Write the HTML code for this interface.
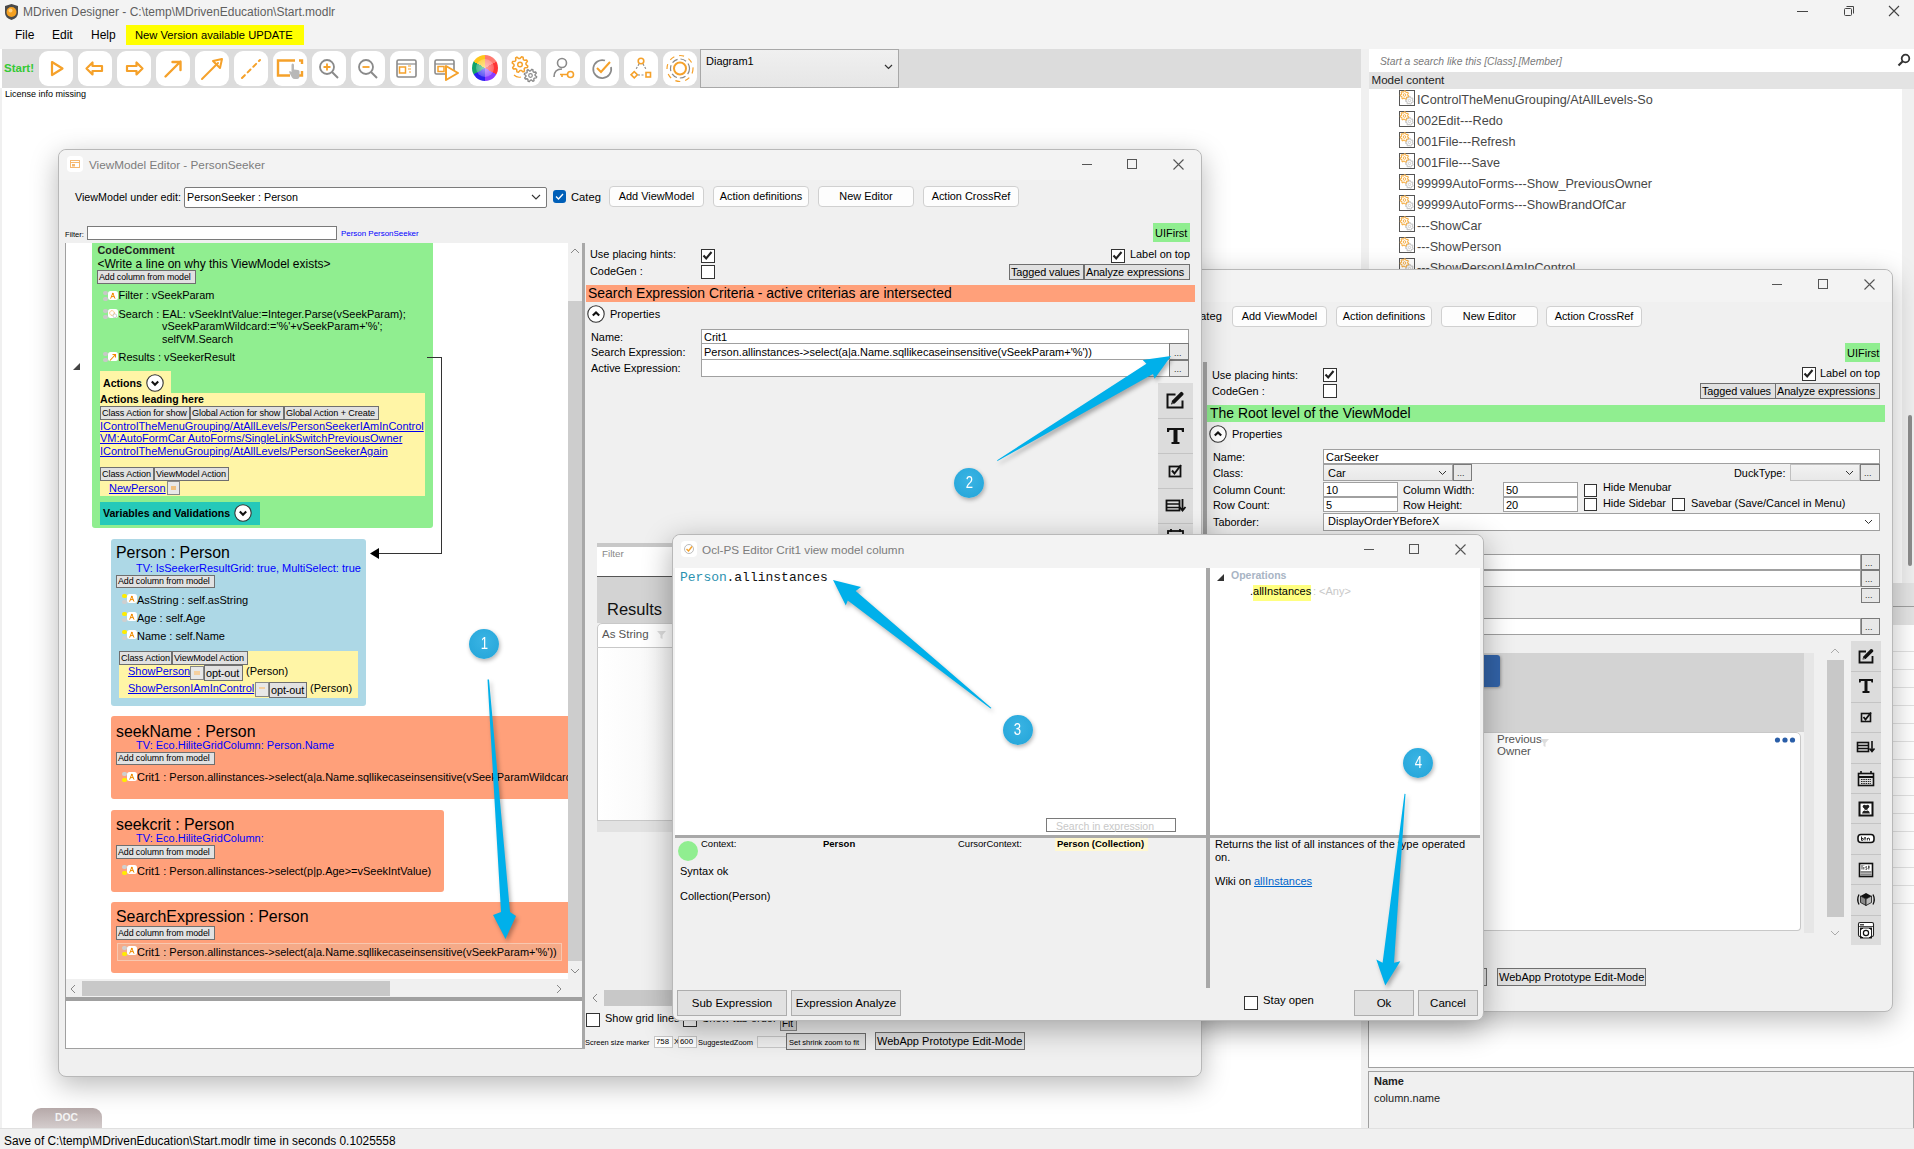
<!DOCTYPE html>
<html><head><meta charset="utf-8">
<style>
*{box-sizing:border-box;margin:0;padding:0}
html,body{width:1914px;height:1149px;overflow:hidden;background:#fff;font-family:"Liberation Sans",sans-serif;color:#000}
.a{position:absolute}
.t{position:absolute;white-space:nowrap;line-height:1}
.lnk{color:#0000ee;text-decoration:underline}
svg.a{overflow:visible}
</style></head><body>
<div class="a" style="left:0px;top:0px;width:1914px;height:1149px;background:#fff"></div>
<div class="a" style="left:0px;top:88px;width:2px;height:1042px;background:#f0f0f0"></div>
<div class="a" style="left:0px;top:0px;width:1914px;height:24px;background:#f3f3f3"></div>
<svg class="a" style="left:3px;top:3px;" width="17" height="18" viewBox="0 0 17 18"><path d="M2 3 L8.5 1 L15 3 L15 10 Q15 15 8.5 17 Q2 15 2 10 Z" fill="#4a4a4a"/><circle cx="8.5" cy="9" r="5" fill="#f5a020"/><circle cx="7.5" cy="7.5" r="2" fill="#ffd080"/></svg>
<div class="t" style="left:23px;top:5.8px;font-size:12px;color:#5f5f5f">MDriven Designer - C:\temp\MDrivenEducation\Start.modlr</div>
<div class="a" style="left:1797px;top:11px;width:11px;height:1px;background:#444"></div>
<svg class="a" style="left:1843px;top:5px;" width="12" height="12" viewBox="0 0 12 12"><rect x="1.5" y="3.5" width="7" height="7" fill="none" stroke="#444" rx="1"/><path d="M3.5 1.5 H10.5 V8.5" fill="none" stroke="#444"/></svg>
<svg class="a" style="left:1888px;top:5px;" width="12" height="12" viewBox="0 0 12 12"><path d="M1 1 L11 11 M11 1 L1 11" stroke="#444" stroke-width="1.1"/></svg>
<div class="a" style="left:0px;top:24px;width:1914px;height:25px;background:#f3f3f3"></div>
<div class="t" style="left:15px;top:28.8px;font-size:12px;color:#000">File</div>
<div class="t" style="left:52px;top:28.8px;font-size:12px;color:#000">Edit</div>
<div class="t" style="left:91px;top:28.8px;font-size:12px;color:#000">Help</div>
<div class="a" style="left:126px;top:25px;width:178px;height:20px;background:#ffff00"></div>
<div class="t" style="left:135px;top:29.5px;font-size:11.2px;color:#000">New Version available UPDATE</div>
<div class="a" style="left:2px;top:49px;width:1360px;height:39px;background:#dcdcdc"></div>
<div class="t" style="left:4px;top:63.3px;font-size:11.5px;color:#35c935;font-weight:bold">Start!</div>
<svg width="0" height="0" style="position:absolute"><defs><linearGradient id="cw" x1="0" y1="0" x2="1" y2="1"><stop offset="0" stop-color="#f5d000"/><stop offset=".3" stop-color="#ff5050"/><stop offset=".55" stop-color="#9040ff"/><stop offset=".8" stop-color="#2050ff"/><stop offset="1" stop-color="#20b060"/></linearGradient></defs></svg>
<div class="a" style="left:39px;top:51px;width:34px;height:35px;background:#fff;border-radius:9px"></div>
<svg class="a" style="left:39px;top:51px;" width="34" height="35" viewBox="0 0 34 35"><path d="M13 11 L23.5 17.5 L13 24 Z" fill="none" stroke="#f5a12a" stroke-width="2.2" stroke-linejoin="round"/></svg>
<div class="a" style="left:78px;top:51px;width:34px;height:35px;background:#fff;border-radius:9px"></div>
<svg class="a" style="left:78px;top:51px;" width="34" height="35" viewBox="0 0 34 35"><path d="M8.5 17.5 L14.5 11.5 V15 H24 V20 H14.5 V23.5 Z" fill="none" stroke="#f5a12a" stroke-width="2.2" stroke-linejoin="round"/></svg>
<div class="a" style="left:117px;top:51px;width:34px;height:35px;background:#fff;border-radius:9px"></div>
<svg class="a" style="left:117px;top:51px;" width="34" height="35" viewBox="0 0 34 35"><path d="M25.5 17.5 L19.5 11.5 V15 H10 V20 H19.5 V23.5 Z" fill="none" stroke="#f5a12a" stroke-width="2.2" stroke-linejoin="round"/></svg>
<div class="a" style="left:156px;top:51px;width:34px;height:35px;background:#fff;border-radius:9px"></div>
<svg class="a" style="left:156px;top:51px;" width="34" height="35" viewBox="0 0 34 35"><path d="M9.5 25.5 L24.5 10.5 M16.5 11 H24.5 V19" fill="none" stroke="#f5a12a" stroke-width="2.4" stroke-linecap="round" stroke-linejoin="round"/></svg>
<div class="a" style="left:195px;top:51px;width:34px;height:35px;background:#fff;border-radius:9px"></div>
<svg class="a" style="left:195px;top:51px;" width="34" height="35" viewBox="0 0 34 35"><path d="M7 28 L23 12" stroke="#f5a12a" stroke-width="2" stroke-linecap="round"/><path d="M18 10 L27 8 L25 17 Z" fill="none" stroke="#f5a12a" stroke-width="2" stroke-linejoin="round"/></svg>
<div class="a" style="left:234px;top:51px;width:34px;height:35px;background:#fff;border-radius:9px"></div>
<svg class="a" style="left:234px;top:51px;" width="34" height="35" viewBox="0 0 34 35"><path d="M8 27 L26 9" stroke="#f5a12a" stroke-width="2" stroke-linecap="round" stroke-dasharray="4 4"/></svg>
<div class="a" style="left:273px;top:51px;width:34px;height:35px;background:#fff;border-radius:9px"></div>
<svg class="a" style="left:273px;top:51px;" width="34" height="35" viewBox="0 0 34 35"><path d="M22 9.5 H5 V24.5 H17 M25 24.5 H29 V20 M29 13 V9.5 H26" fill="none" stroke="#f5a12a" stroke-width="2.4"/><path d="M18.5 14 V21 L17 20 Q15.5 20 16.5 22 L19 26.5 Q20 28 22 28 H24 Q26.5 28 26.5 25 V20.5 Q26.5 19 25 19 L21 18.5 V14 Q21 12.5 19.7 12.5 Q18.5 12.5 18.5 14 Z" fill="#b8b8b8"/></svg>
<div class="a" style="left:312px;top:51px;width:34px;height:35px;background:#fff;border-radius:9px"></div>
<svg class="a" style="left:312px;top:51px;" width="34" height="35" viewBox="0 0 34 35"><circle cx="15" cy="16" r="7" fill="none" stroke="#8a8a8a" stroke-width="1.8"/><path d="M20 21 L26 27" stroke="#8a8a8a" stroke-width="2"/><path d="M15 12.5 V19.5 M11.5 16 H18.5" stroke="#f5a12a" stroke-width="1.8"/></svg>
<div class="a" style="left:351px;top:51px;width:34px;height:35px;background:#fff;border-radius:9px"></div>
<svg class="a" style="left:351px;top:51px;" width="34" height="35" viewBox="0 0 34 35"><circle cx="15" cy="16" r="7" fill="none" stroke="#8a8a8a" stroke-width="1.8"/><path d="M20 21 L26 27" stroke="#8a8a8a" stroke-width="2"/><path d="M11.5 16 H18.5" stroke="#f5a12a" stroke-width="1.8"/></svg>
<div class="a" style="left:390px;top:51px;width:34px;height:35px;background:#fff;border-radius:9px"></div>
<svg class="a" style="left:390px;top:51px;" width="34" height="35" viewBox="0 0 34 35"><rect x="7" y="9" width="19" height="17" rx="1.5" fill="none" stroke="#8a8a8a" stroke-width="1.6"/><path d="M7 13 H26" stroke="#8a8a8a" stroke-width="1.2"/><rect x="9.5" y="16" width="6" height="6" fill="none" stroke="#f5a12a" stroke-width="1.5"/><path d="M18 15 H21 M18 18 H21 M19 21 H21" stroke="#f5a12a" stroke-width="1.2"/></svg>
<div class="a" style="left:429px;top:51px;width:34px;height:35px;background:#fff;border-radius:9px"></div>
<svg class="a" style="left:429px;top:51px;" width="34" height="35" viewBox="0 0 34 35"><rect x="6" y="9" width="19" height="14" rx="1.5" fill="none" stroke="#8a8a8a" stroke-width="1.6"/><path d="M6 13 H25" stroke="#8a8a8a" stroke-width="1.2"/><rect x="9" y="15.5" width="6" height="5" fill="none" stroke="#f5a12a" stroke-width="1.5"/><path d="M17 15 L29 22 L17 29 Z" fill="#fff" stroke="#f5a12a" stroke-width="2" stroke-linejoin="round"/></svg>
<div class="a" style="left:468px;top:51px;width:34px;height:35px;background:#fff;border-radius:9px"></div>
<svg class="a" style="left:468px;top:51px;" width="34" height="35" viewBox="0 0 34 35"></svg>
<div class="a" style="left:472px;top:55px;width:26px;height:26px;border-radius:50%;background:conic-gradient(#ff7a70 0deg 60deg,#ff3535 60deg 120deg,#8a3cff 120deg 180deg,#2a22f0 180deg 240deg,#12a36a 240deg 300deg,#ffc61a 300deg 360deg)"></div>
<div class="a" style="left:476px;top:59px;width:18px;height:18px;border-radius:50%;background:radial-gradient(rgba(255,255,255,.55),rgba(255,255,255,.1))"></div>
<div class="a" style="left:507px;top:51px;width:34px;height:35px;background:#fff;border-radius:9px"></div>
<svg class="a" style="left:507px;top:51px;" width="34" height="35" viewBox="0 0 34 35"><path d="M19.0 13.5 L20.8 15.1 L20.4 16.6 L18.0 16.8 L17.2 17.7 L17.4 20.2 L16.1 20.9 L14.2 19.4 L13.0 19.5 L11.4 21.3 L9.9 20.9 L9.7 18.5 L8.8 17.7 L6.3 17.9 L5.6 16.6 L7.1 14.7 L7.0 13.5 L5.2 11.9 L5.6 10.4 L8.0 10.2 L8.8 9.3 L8.6 6.8 L9.9 6.1 L11.8 7.6 L13.0 7.5 L14.6 5.7 L16.1 6.1 L16.3 8.5 L17.2 9.3 L19.7 9.1 L20.4 10.4 L18.9 12.3 Z" fill="none" stroke="#f5a12a" stroke-width="1.5" stroke-linejoin="round"/><circle cx="13" cy="13.5" r="2.3" fill="none" stroke="#f5a12a" stroke-width="1.4"/><path d="M7 24 Q10 27 14 26" fill="none" stroke="#f5a12a" stroke-width="1.2"/><path d="M28.1 24.5 L29.7 25.7 L29.3 26.9 L27.3 27.1 L26.8 27.8 L27.0 29.7 L25.9 30.3 L24.4 29.0 L23.5 29.1 L22.3 30.7 L21.1 30.3 L20.9 28.3 L20.2 27.8 L18.3 28.0 L17.7 26.9 L19.0 25.4 L18.9 24.5 L17.3 23.3 L17.7 22.1 L19.7 21.9 L20.2 21.2 L20.0 19.3 L21.1 18.7 L22.6 20.0 L23.5 19.9 L24.7 18.3 L25.9 18.7 L26.1 20.7 L26.8 21.2 L28.7 21.0 L29.3 22.1 L28.0 23.6 Z" fill="#fff" stroke="#8a8a8a" stroke-width="1.4" stroke-linejoin="round"/><circle cx="23.5" cy="24.5" r="1.8" fill="none" stroke="#8a8a8a" stroke-width="1.2"/></svg>
<div class="a" style="left:546px;top:51px;width:34px;height:35px;background:#fff;border-radius:9px"></div>
<svg class="a" style="left:546px;top:51px;" width="34" height="35" viewBox="0 0 34 35"><circle cx="16" cy="12" r="4.5" fill="none" stroke="#8a8a8a" stroke-width="1.6"/><path d="M8 26 Q8 18 16 18" fill="none" stroke="#8a8a8a" stroke-width="1.6"/><circle cx="24.5" cy="23.5" r="3" fill="none" stroke="#f5a12a" stroke-width="1.6"/><path d="M14 23.5 H21.5 M16 23.5 V26" stroke="#f5a12a" stroke-width="1.6"/></svg>
<div class="a" style="left:585px;top:51px;width:34px;height:35px;background:#fff;border-radius:9px"></div>
<svg class="a" style="left:585px;top:51px;" width="34" height="35" viewBox="0 0 34 35"><path d="M26 16 A9 9 0 1 1 20 9.5" fill="none" stroke="#8a8a8a" stroke-width="1.7"/><path d="M12 17 L16 21 L25 11" fill="none" stroke="#f5a12a" stroke-width="2"/></svg>
<div class="a" style="left:624px;top:51px;width:34px;height:35px;background:#fff;border-radius:9px"></div>
<svg class="a" style="left:624px;top:51px;" width="34" height="35" viewBox="0 0 34 35"><circle cx="17" cy="10" r="2.8" fill="none" stroke="#f5a12a" stroke-width="1.6"/><rect x="8" y="21.5" width="4.5" height="4.5" transform="rotate(45 10.25 23.75)" fill="none" stroke="#f5a12a" stroke-width="1.6"/><rect x="22" y="21.5" width="4.5" height="4.5" fill="none" stroke="#f5a12a" stroke-width="1.6"/><path d="M15 13 L11.5 19 M19 13 L22.5 19 M14 24 H20" stroke="#8a8a8a" stroke-width="1.2" stroke-dasharray="2 1.5"/></svg>
<div class="a" style="left:663px;top:51px;width:34px;height:35px;background:#fff;border-radius:9px"></div>
<svg class="a" style="left:663px;top:51px;" width="34" height="35" viewBox="0 0 34 35"><circle cx="17" cy="17.5" r="6" fill="none" stroke="#f5a12a" stroke-width="2"/><circle cx="17" cy="17.5" r="9.5" fill="none" stroke="#8a8a8a" stroke-width="1.2" stroke-dasharray="6 3"/><circle cx="17" cy="17.5" r="13" fill="none" stroke="#f5a12a" stroke-width="1.2" stroke-dasharray="5 5"/></svg>
<div class="a" style="left:700px;top:49px;width:199px;height:39px;background:linear-gradient(#f0f0f0,#e6e6e6);border:1px solid #a8a8a8"></div>
<div class="t" style="left:706px;top:55.7px;font-size:11px;color:#000">Diagram1</div>
<svg class="a" style="left:884px;top:64px;" width="9" height="6" viewBox="0 0 9 6"><path d="M1 1 L4.5 4.5 L8 1" fill="none" stroke="#333" stroke-width="1.2"/></svg>
<div class="t" style="left:5px;top:90.4px;font-size:9px;color:#000">License info missing</div>
<div class="a" style="left:1361px;top:49px;width:8px;height:1081px;background:#f0f0f0"></div>
<div class="a" style="left:1369px;top:49px;width:545px;height:23px;background:#fff"></div>
<div class="t" style="left:1380px;top:56.8px;font-size:10.3px;color:#7a7a7a;font-style:italic">Start a search like this [Class].[Member]</div>
<svg class="a" style="left:1897px;top:53px;" width="14" height="14" viewBox="0 0 14 14"><circle cx="8.5" cy="5.5" r="3.8" fill="none" stroke="#333" stroke-width="1.8"/><path d="M6 8 L1.5 12.5" stroke="#333" stroke-width="2.2"/></svg>
<div class="a" style="left:1369px;top:72px;width:545px;height:17px;background:#e3e3e3"></div>
<div class="t" style="left:1371.5px;top:73.7px;font-size:11.6px;color:#222">Model content</div>
<div class="a" style="left:1369px;top:89px;width:533px;height:978px;background:#fff"></div>
<div class="a" style="left:1902px;top:89px;width:12px;height:494px;background:#f0f0f0"></div>
<div class="a" style="left:1908px;top:415px;width:4px;height:151px;background:#8c8c8c;border-radius:2px"></div>
<div class="a" style="left:1368px;top:583px;width:1px;height:485px;background:#a0a0a0"></div>
<div class="a" style="left:1368px;top:1067px;width:546px;height:1px;background:#a0a0a0"></div>
<div class="a" style="left:1369px;top:583px;width:545px;height:42px;background:#e4e4e4"></div>
<div class="a" style="left:1369px;top:606px;width:545px;height:1px;background:#a0a0a0"></div>
<div class="a" style="left:1369px;top:651px;width:545px;height:1px;background:#e2e2e2"></div>
<div class="a" style="left:1369px;top:669px;width:545px;height:1px;background:#e2e2e2"></div>
<div class="a" style="left:1369px;top:687px;width:545px;height:1px;background:#e2e2e2"></div>
<div class="a" style="left:1369px;top:705px;width:545px;height:1px;background:#e2e2e2"></div>
<div class="a" style="left:1369px;top:723px;width:545px;height:1px;background:#e2e2e2"></div>
<div class="a" style="left:1369px;top:741px;width:545px;height:1px;background:#e2e2e2"></div>
<div class="a" style="left:1369px;top:759px;width:545px;height:1px;background:#e2e2e2"></div>
<div class="a" style="left:1369px;top:777px;width:545px;height:1px;background:#e2e2e2"></div>
<div class="a" style="left:1369px;top:795px;width:545px;height:1px;background:#e2e2e2"></div>
<div class="a" style="left:1369px;top:813px;width:545px;height:1px;background:#e2e2e2"></div>
<div class="a" style="left:1369px;top:831px;width:545px;height:1px;background:#e2e2e2"></div>
<div class="a" style="left:1369px;top:849px;width:545px;height:1px;background:#e2e2e2"></div>
<div class="a" style="left:1369px;top:867px;width:545px;height:1px;background:#e2e2e2"></div>
<div class="a" style="left:1369px;top:885px;width:545px;height:1px;background:#e2e2e2"></div>
<div class="a" style="left:1369px;top:903px;width:545px;height:1px;background:#e2e2e2"></div>
<div class="a" style="left:1399px;top:90px;width:16px;height:16px;background:#fff;border:1px solid #555"></div>
<svg class="a" style="left:1399px;top:90px;" width="16" height="16" viewBox="0 0 16 16"><path d="M13.5 10.5 L14.2 11.3 L13.9 12.1 L12.8 12.4 L12.4 12.8 L12.1 13.9 L11.3 14.2 L10.5 13.5 L9.8 13.4 L8.9 13.9 L8.1 13.5 L8.2 12.4 L7.8 11.8 L6.8 11.3 L6.7 10.5 L7.6 9.8 L7.8 9.2 L7.5 8.1 L8.1 7.5 L9.2 7.8 L9.8 7.6 L10.5 6.7 L11.3 6.8 L11.8 7.8 L12.4 8.2 L13.5 8.1 L13.9 8.9 L13.4 9.8 Z" fill="#fff" stroke="#c8c8c8" stroke-width="1.1"/><circle cx="10.5" cy="10.5" r="1.2" fill="none" stroke="#c8c8c8" stroke-width=".9"/><path d="M8.7 5.0 L9.6 5.9 L9.3 6.8 L8.0 7.0 L7.5 7.5 L7.3 8.8 L6.4 9.1 L5.5 8.2 L4.8 8.1 L3.7 8.8 L2.9 8.3 L3.0 7.0 L2.6 6.4 L1.4 5.9 L1.3 5.0 L2.4 4.3 L2.6 3.6 L2.2 2.4 L2.9 1.7 L4.1 2.1 L4.8 1.9 L5.5 0.8 L6.4 0.9 L6.9 2.1 L7.5 2.5 L8.8 2.4 L9.3 3.2 L8.6 4.3 Z" fill="#fff" stroke="#f5b04a" stroke-width="1.1"/><circle cx="5.5" cy="5" r="1.3" fill="none" stroke="#f5b04a" stroke-width="1"/></svg>
<div class="t" style="left:1417px;top:94.3px;font-size:12.66px;color:#474747">IControlTheMenuGrouping/AtAllLevels-So</div>
<div class="a" style="left:1399px;top:111px;width:16px;height:16px;background:#fff;border:1px solid #555"></div>
<svg class="a" style="left:1399px;top:111px;" width="16" height="16" viewBox="0 0 16 16"><path d="M13.5 10.5 L14.2 11.3 L13.9 12.1 L12.8 12.4 L12.4 12.8 L12.1 13.9 L11.3 14.2 L10.5 13.5 L9.8 13.4 L8.9 13.9 L8.1 13.5 L8.2 12.4 L7.8 11.8 L6.8 11.3 L6.7 10.5 L7.6 9.8 L7.8 9.2 L7.5 8.1 L8.1 7.5 L9.2 7.8 L9.8 7.6 L10.5 6.7 L11.3 6.8 L11.8 7.8 L12.4 8.2 L13.5 8.1 L13.9 8.9 L13.4 9.8 Z" fill="#fff" stroke="#c8c8c8" stroke-width="1.1"/><circle cx="10.5" cy="10.5" r="1.2" fill="none" stroke="#c8c8c8" stroke-width=".9"/><path d="M8.7 5.0 L9.6 5.9 L9.3 6.8 L8.0 7.0 L7.5 7.5 L7.3 8.8 L6.4 9.1 L5.5 8.2 L4.8 8.1 L3.7 8.8 L2.9 8.3 L3.0 7.0 L2.6 6.4 L1.4 5.9 L1.3 5.0 L2.4 4.3 L2.6 3.6 L2.2 2.4 L2.9 1.7 L4.1 2.1 L4.8 1.9 L5.5 0.8 L6.4 0.9 L6.9 2.1 L7.5 2.5 L8.8 2.4 L9.3 3.2 L8.6 4.3 Z" fill="#fff" stroke="#f5b04a" stroke-width="1.1"/><circle cx="5.5" cy="5" r="1.3" fill="none" stroke="#f5b04a" stroke-width="1"/></svg>
<div class="t" style="left:1417px;top:115.3px;font-size:12.66px;color:#474747">002Edit---Redo</div>
<div class="a" style="left:1399px;top:132px;width:16px;height:16px;background:#fff;border:1px solid #555"></div>
<svg class="a" style="left:1399px;top:132px;" width="16" height="16" viewBox="0 0 16 16"><path d="M13.5 10.5 L14.2 11.3 L13.9 12.1 L12.8 12.4 L12.4 12.8 L12.1 13.9 L11.3 14.2 L10.5 13.5 L9.8 13.4 L8.9 13.9 L8.1 13.5 L8.2 12.4 L7.8 11.8 L6.8 11.3 L6.7 10.5 L7.6 9.8 L7.8 9.2 L7.5 8.1 L8.1 7.5 L9.2 7.8 L9.8 7.6 L10.5 6.7 L11.3 6.8 L11.8 7.8 L12.4 8.2 L13.5 8.1 L13.9 8.9 L13.4 9.8 Z" fill="#fff" stroke="#c8c8c8" stroke-width="1.1"/><circle cx="10.5" cy="10.5" r="1.2" fill="none" stroke="#c8c8c8" stroke-width=".9"/><path d="M8.7 5.0 L9.6 5.9 L9.3 6.8 L8.0 7.0 L7.5 7.5 L7.3 8.8 L6.4 9.1 L5.5 8.2 L4.8 8.1 L3.7 8.8 L2.9 8.3 L3.0 7.0 L2.6 6.4 L1.4 5.9 L1.3 5.0 L2.4 4.3 L2.6 3.6 L2.2 2.4 L2.9 1.7 L4.1 2.1 L4.8 1.9 L5.5 0.8 L6.4 0.9 L6.9 2.1 L7.5 2.5 L8.8 2.4 L9.3 3.2 L8.6 4.3 Z" fill="#fff" stroke="#f5b04a" stroke-width="1.1"/><circle cx="5.5" cy="5" r="1.3" fill="none" stroke="#f5b04a" stroke-width="1"/></svg>
<div class="t" style="left:1417px;top:136.3px;font-size:12.66px;color:#474747">001File---Refresh</div>
<div class="a" style="left:1399px;top:153px;width:16px;height:16px;background:#fff;border:1px solid #555"></div>
<svg class="a" style="left:1399px;top:153px;" width="16" height="16" viewBox="0 0 16 16"><path d="M13.5 10.5 L14.2 11.3 L13.9 12.1 L12.8 12.4 L12.4 12.8 L12.1 13.9 L11.3 14.2 L10.5 13.5 L9.8 13.4 L8.9 13.9 L8.1 13.5 L8.2 12.4 L7.8 11.8 L6.8 11.3 L6.7 10.5 L7.6 9.8 L7.8 9.2 L7.5 8.1 L8.1 7.5 L9.2 7.8 L9.8 7.6 L10.5 6.7 L11.3 6.8 L11.8 7.8 L12.4 8.2 L13.5 8.1 L13.9 8.9 L13.4 9.8 Z" fill="#fff" stroke="#c8c8c8" stroke-width="1.1"/><circle cx="10.5" cy="10.5" r="1.2" fill="none" stroke="#c8c8c8" stroke-width=".9"/><path d="M8.7 5.0 L9.6 5.9 L9.3 6.8 L8.0 7.0 L7.5 7.5 L7.3 8.8 L6.4 9.1 L5.5 8.2 L4.8 8.1 L3.7 8.8 L2.9 8.3 L3.0 7.0 L2.6 6.4 L1.4 5.9 L1.3 5.0 L2.4 4.3 L2.6 3.6 L2.2 2.4 L2.9 1.7 L4.1 2.1 L4.8 1.9 L5.5 0.8 L6.4 0.9 L6.9 2.1 L7.5 2.5 L8.8 2.4 L9.3 3.2 L8.6 4.3 Z" fill="#fff" stroke="#f5b04a" stroke-width="1.1"/><circle cx="5.5" cy="5" r="1.3" fill="none" stroke="#f5b04a" stroke-width="1"/></svg>
<div class="t" style="left:1417px;top:157.3px;font-size:12.66px;color:#474747">001File---Save</div>
<div class="a" style="left:1399px;top:174px;width:16px;height:16px;background:#fff;border:1px solid #555"></div>
<svg class="a" style="left:1399px;top:174px;" width="16" height="16" viewBox="0 0 16 16"><path d="M13.5 10.5 L14.2 11.3 L13.9 12.1 L12.8 12.4 L12.4 12.8 L12.1 13.9 L11.3 14.2 L10.5 13.5 L9.8 13.4 L8.9 13.9 L8.1 13.5 L8.2 12.4 L7.8 11.8 L6.8 11.3 L6.7 10.5 L7.6 9.8 L7.8 9.2 L7.5 8.1 L8.1 7.5 L9.2 7.8 L9.8 7.6 L10.5 6.7 L11.3 6.8 L11.8 7.8 L12.4 8.2 L13.5 8.1 L13.9 8.9 L13.4 9.8 Z" fill="#fff" stroke="#c8c8c8" stroke-width="1.1"/><circle cx="10.5" cy="10.5" r="1.2" fill="none" stroke="#c8c8c8" stroke-width=".9"/><path d="M8.7 5.0 L9.6 5.9 L9.3 6.8 L8.0 7.0 L7.5 7.5 L7.3 8.8 L6.4 9.1 L5.5 8.2 L4.8 8.1 L3.7 8.8 L2.9 8.3 L3.0 7.0 L2.6 6.4 L1.4 5.9 L1.3 5.0 L2.4 4.3 L2.6 3.6 L2.2 2.4 L2.9 1.7 L4.1 2.1 L4.8 1.9 L5.5 0.8 L6.4 0.9 L6.9 2.1 L7.5 2.5 L8.8 2.4 L9.3 3.2 L8.6 4.3 Z" fill="#fff" stroke="#f5b04a" stroke-width="1.1"/><circle cx="5.5" cy="5" r="1.3" fill="none" stroke="#f5b04a" stroke-width="1"/></svg>
<div class="t" style="left:1417px;top:178.3px;font-size:12.66px;color:#474747">99999AutoForms---Show_PreviousOwner</div>
<div class="a" style="left:1399px;top:195px;width:16px;height:16px;background:#fff;border:1px solid #555"></div>
<svg class="a" style="left:1399px;top:195px;" width="16" height="16" viewBox="0 0 16 16"><path d="M13.5 10.5 L14.2 11.3 L13.9 12.1 L12.8 12.4 L12.4 12.8 L12.1 13.9 L11.3 14.2 L10.5 13.5 L9.8 13.4 L8.9 13.9 L8.1 13.5 L8.2 12.4 L7.8 11.8 L6.8 11.3 L6.7 10.5 L7.6 9.8 L7.8 9.2 L7.5 8.1 L8.1 7.5 L9.2 7.8 L9.8 7.6 L10.5 6.7 L11.3 6.8 L11.8 7.8 L12.4 8.2 L13.5 8.1 L13.9 8.9 L13.4 9.8 Z" fill="#fff" stroke="#c8c8c8" stroke-width="1.1"/><circle cx="10.5" cy="10.5" r="1.2" fill="none" stroke="#c8c8c8" stroke-width=".9"/><path d="M8.7 5.0 L9.6 5.9 L9.3 6.8 L8.0 7.0 L7.5 7.5 L7.3 8.8 L6.4 9.1 L5.5 8.2 L4.8 8.1 L3.7 8.8 L2.9 8.3 L3.0 7.0 L2.6 6.4 L1.4 5.9 L1.3 5.0 L2.4 4.3 L2.6 3.6 L2.2 2.4 L2.9 1.7 L4.1 2.1 L4.8 1.9 L5.5 0.8 L6.4 0.9 L6.9 2.1 L7.5 2.5 L8.8 2.4 L9.3 3.2 L8.6 4.3 Z" fill="#fff" stroke="#f5b04a" stroke-width="1.1"/><circle cx="5.5" cy="5" r="1.3" fill="none" stroke="#f5b04a" stroke-width="1"/></svg>
<div class="t" style="left:1417px;top:199.3px;font-size:12.66px;color:#474747">99999AutoForms---ShowBrandOfCar</div>
<div class="a" style="left:1399px;top:216px;width:16px;height:16px;background:#fff;border:1px solid #555"></div>
<svg class="a" style="left:1399px;top:216px;" width="16" height="16" viewBox="0 0 16 16"><path d="M13.5 10.5 L14.2 11.3 L13.9 12.1 L12.8 12.4 L12.4 12.8 L12.1 13.9 L11.3 14.2 L10.5 13.5 L9.8 13.4 L8.9 13.9 L8.1 13.5 L8.2 12.4 L7.8 11.8 L6.8 11.3 L6.7 10.5 L7.6 9.8 L7.8 9.2 L7.5 8.1 L8.1 7.5 L9.2 7.8 L9.8 7.6 L10.5 6.7 L11.3 6.8 L11.8 7.8 L12.4 8.2 L13.5 8.1 L13.9 8.9 L13.4 9.8 Z" fill="#fff" stroke="#c8c8c8" stroke-width="1.1"/><circle cx="10.5" cy="10.5" r="1.2" fill="none" stroke="#c8c8c8" stroke-width=".9"/><path d="M8.7 5.0 L9.6 5.9 L9.3 6.8 L8.0 7.0 L7.5 7.5 L7.3 8.8 L6.4 9.1 L5.5 8.2 L4.8 8.1 L3.7 8.8 L2.9 8.3 L3.0 7.0 L2.6 6.4 L1.4 5.9 L1.3 5.0 L2.4 4.3 L2.6 3.6 L2.2 2.4 L2.9 1.7 L4.1 2.1 L4.8 1.9 L5.5 0.8 L6.4 0.9 L6.9 2.1 L7.5 2.5 L8.8 2.4 L9.3 3.2 L8.6 4.3 Z" fill="#fff" stroke="#f5b04a" stroke-width="1.1"/><circle cx="5.5" cy="5" r="1.3" fill="none" stroke="#f5b04a" stroke-width="1"/></svg>
<div class="t" style="left:1417px;top:220.3px;font-size:12.66px;color:#474747">---ShowCar</div>
<div class="a" style="left:1399px;top:237px;width:16px;height:16px;background:#fff;border:1px solid #555"></div>
<svg class="a" style="left:1399px;top:237px;" width="16" height="16" viewBox="0 0 16 16"><path d="M13.5 10.5 L14.2 11.3 L13.9 12.1 L12.8 12.4 L12.4 12.8 L12.1 13.9 L11.3 14.2 L10.5 13.5 L9.8 13.4 L8.9 13.9 L8.1 13.5 L8.2 12.4 L7.8 11.8 L6.8 11.3 L6.7 10.5 L7.6 9.8 L7.8 9.2 L7.5 8.1 L8.1 7.5 L9.2 7.8 L9.8 7.6 L10.5 6.7 L11.3 6.8 L11.8 7.8 L12.4 8.2 L13.5 8.1 L13.9 8.9 L13.4 9.8 Z" fill="#fff" stroke="#c8c8c8" stroke-width="1.1"/><circle cx="10.5" cy="10.5" r="1.2" fill="none" stroke="#c8c8c8" stroke-width=".9"/><path d="M8.7 5.0 L9.6 5.9 L9.3 6.8 L8.0 7.0 L7.5 7.5 L7.3 8.8 L6.4 9.1 L5.5 8.2 L4.8 8.1 L3.7 8.8 L2.9 8.3 L3.0 7.0 L2.6 6.4 L1.4 5.9 L1.3 5.0 L2.4 4.3 L2.6 3.6 L2.2 2.4 L2.9 1.7 L4.1 2.1 L4.8 1.9 L5.5 0.8 L6.4 0.9 L6.9 2.1 L7.5 2.5 L8.8 2.4 L9.3 3.2 L8.6 4.3 Z" fill="#fff" stroke="#f5b04a" stroke-width="1.1"/><circle cx="5.5" cy="5" r="1.3" fill="none" stroke="#f5b04a" stroke-width="1"/></svg>
<div class="t" style="left:1417px;top:241.3px;font-size:12.66px;color:#474747">---ShowPerson</div>
<div class="a" style="left:1399px;top:258px;width:16px;height:16px;background:#fff;border:1px solid #555"></div>
<svg class="a" style="left:1399px;top:258px;" width="16" height="16" viewBox="0 0 16 16"><path d="M13.5 10.5 L14.2 11.3 L13.9 12.1 L12.8 12.4 L12.4 12.8 L12.1 13.9 L11.3 14.2 L10.5 13.5 L9.8 13.4 L8.9 13.9 L8.1 13.5 L8.2 12.4 L7.8 11.8 L6.8 11.3 L6.7 10.5 L7.6 9.8 L7.8 9.2 L7.5 8.1 L8.1 7.5 L9.2 7.8 L9.8 7.6 L10.5 6.7 L11.3 6.8 L11.8 7.8 L12.4 8.2 L13.5 8.1 L13.9 8.9 L13.4 9.8 Z" fill="#fff" stroke="#c8c8c8" stroke-width="1.1"/><circle cx="10.5" cy="10.5" r="1.2" fill="none" stroke="#c8c8c8" stroke-width=".9"/><path d="M8.7 5.0 L9.6 5.9 L9.3 6.8 L8.0 7.0 L7.5 7.5 L7.3 8.8 L6.4 9.1 L5.5 8.2 L4.8 8.1 L3.7 8.8 L2.9 8.3 L3.0 7.0 L2.6 6.4 L1.4 5.9 L1.3 5.0 L2.4 4.3 L2.6 3.6 L2.2 2.4 L2.9 1.7 L4.1 2.1 L4.8 1.9 L5.5 0.8 L6.4 0.9 L6.9 2.1 L7.5 2.5 L8.8 2.4 L9.3 3.2 L8.6 4.3 Z" fill="#fff" stroke="#f5b04a" stroke-width="1.1"/><circle cx="5.5" cy="5" r="1.3" fill="none" stroke="#f5b04a" stroke-width="1"/></svg>
<div class="t" style="left:1417px;top:262.3px;font-size:12.66px;color:#474747">---ShowPersonIAmInControl</div>
<div class="a" style="left:1368px;top:1071px;width:546px;height:59px;background:#f0f0f0;border:1px solid #a0a0a0"></div>
<div class="t" style="left:1374px;top:1075.7px;font-size:11px;color:#222;font-weight:bold">Name</div>
<div class="t" style="left:1374px;top:1092.7px;font-size:11px;color:#222">column.name</div>
<div class="a" style="left:1369px;top:1067px;width:545px;height:4px;background:#f0f0f0"></div>
<div class="a" style="left:1368px;top:1067px;width:546px;height:1px;background:#a0a0a0"></div>
<div class="a" style="left:0px;top:1128px;width:1914px;height:1px;background:#e0e0e0"></div>
<div class="a" style="left:0px;top:1129px;width:1914px;height:20px;background:#f0f0f0"></div>
<div class="t" style="left:4px;top:1136.4px;font-size:11.87px;color:#000">Save of C:\temp\MDrivenEducation\Start.modlr time in seconds 0.1025558</div>
<div class="a" style="left:32px;top:1108px;width:70px;height:20px;background:linear-gradient(#b6a9a9,#d4cccc);border-radius:9px 9px 0 0"></div>
<div class="t" style="left:55px;top:1113.3px;font-size:10.3px;color:#f4f4f4;font-weight:bold">DOC</div>
<div class="a" style="left:1100px;top:269px;width:793px;height:743px;background:#f0f0f0;border:1px solid #b8b8b8;border-radius:8px;box-shadow:0 8px 28px rgba(0,0,0,.28);overflow:hidden"></div>
<div class="a" style="left:1101px;top:270px;width:791px;height:32px;background:#f3f3f3;border-radius:8px 8px 0 0"></div>
<div class="a" style="left:1772px;top:284px;width:10px;height:1px;background:#555"></div>
<div class="a" style="left:1818px;top:279px;width:10px;height:10px;border:1px solid #555"></div>
<svg class="a" style="left:1864px;top:279px;" width="11" height="11" viewBox="0 0 11 11"><path d="M.5 .5 L10.5 10.5 M10.5 .5 L.5 10.5" stroke="#555" stroke-width="1.1"/></svg>
<div class="t" style="left:1192px;top:310.5px;font-size:11.2px">Categ</div>
<div class="a" style="left:1232px;top:306px;width:95px;height:21px;background:#fdfdfd;border:1px solid #d0d0d0;font-size:10.9px;line-height:19px;color:#000;text-align:center;border-radius:4px;white-space:nowrap;overflow:hidden">Add ViewModel</div>
<div class="a" style="left:1336px;top:306px;width:96px;height:21px;background:#fdfdfd;border:1px solid #d0d0d0;font-size:10.9px;line-height:19px;color:#000;text-align:center;border-radius:4px;white-space:nowrap;overflow:hidden">Action definitions</div>
<div class="a" style="left:1441px;top:306px;width:97px;height:21px;background:#fdfdfd;border:1px solid #d0d0d0;font-size:10.9px;line-height:19px;color:#000;text-align:center;border-radius:4px;white-space:nowrap;overflow:hidden">New Editor</div>
<div class="a" style="left:1546px;top:306px;width:96px;height:21px;background:#fdfdfd;border:1px solid #d0d0d0;font-size:10.9px;line-height:19px;color:#000;text-align:center;border-radius:4px;white-space:nowrap;overflow:hidden">Action CrossRef</div>
<div class="a" style="left:1845px;top:343px;width:35px;height:19px;background:#90ee90"></div>
<div class="t" style="left:1847px;top:347.7px;font-size:11px;color:#000">UIFirst</div>
<div class="a" style="left:1203px;top:362px;width:4px;height:650px;background:#a8a8a8"></div>
<div class="t" style="left:1212px;top:369.8px;font-size:10.9px">Use placing hints:</div>
<div class="t" style="left:1212px;top:385.8px;font-size:10.9px">CodeGen :</div>
<div class="a" style="left:1323px;top:368px;width:14px;height:14px;border:1px solid #333;background:#fff"></div>
<svg class="a" style="left:1323px;top:368px" width="14" height="14"><path d="M2.5 6.5 L5.2 9.5 L10.5 3" stroke="#222" stroke-width="2.1" fill="none"/></svg>
<div class="a" style="left:1323px;top:384px;width:14px;height:14px;border:1px solid #333;background:#fff"></div>
<div class="a" style="left:1802px;top:367px;width:14px;height:14px;border:1px solid #333;background:#fff"></div>
<svg class="a" style="left:1802px;top:367px" width="14" height="14"><path d="M2.5 6.5 L5.2 9.5 L10.5 3" stroke="#222" stroke-width="2.1" fill="none"/></svg>
<div class="t" style="left:1820px;top:367.8px;font-size:10.9px">Label on top</div>
<div class="a" style="left:1700px;top:383px;width:76px;height:16px;background:#e1e1e1;border:1px solid #6f6f6f;font-size:10.9px;line-height:14px;color:#000;text-align:center;padding:0 1px;text-align:left;letter-spacing:-.1px;white-space:nowrap;overflow:hidden">Tagged values</div>
<div class="a" style="left:1775px;top:383px;width:105px;height:16px;background:#e1e1e1;border:1px solid #6f6f6f;font-size:10.9px;line-height:14px;color:#000;text-align:center;padding:0 1px;text-align:left;letter-spacing:-.1px;white-space:nowrap;overflow:hidden">Analyze expressions</div>
<div class="a" style="left:1207px;top:405px;width:678px;height:17px;background:#90ee90"></div>
<div class="t" style="left:1210px;top:406.7px;font-size:13.96px">The Root level of the ViewModel</div>
<svg class="a" style="left:1209px;top:425px;" width="19" height="19" viewBox="0 0 19 19"><circle cx="9" cy="9" r="8.2" fill="#fff" stroke="#333" stroke-width="1.1"/><path d="M5.8 10.6 L9 7.4 L12.2 10.6" fill="none" stroke="#111" stroke-width="2.1"/></svg>
<div class="t" style="left:1232px;top:428.7px;font-size:11px">Properties</div>
<div class="t" style="left:1213px;top:451.8px;font-size:10.9px">Name:</div>
<div class="t" style="left:1213px;top:467.8px;font-size:10.9px">Class:</div>
<div class="t" style="left:1213px;top:484.8px;font-size:10.9px">Column Count:</div>
<div class="t" style="left:1213px;top:499.8px;font-size:10.9px">Row Count:</div>
<div class="t" style="left:1213px;top:516.8px;font-size:10.9px">Taborder:</div>
<div class="a" style="left:1323px;top:449px;width:557px;height:15px;background:#fff;border:1px solid #a0a0a0"></div>
<div class="t" style="left:1326px;top:451.7px;font-size:11px">CarSeeker</div>
<div class="a" style="left:1323px;top:464px;width:130px;height:17px;background:linear-gradient(#f2f2f2,#e8e8e8);border:1px solid #a0a0a0"></div>
<div class="t" style="left:1328px;top:467.7px;font-size:11px">Car</div>
<svg class="a" style="left:1438px;top:470px;" width="9" height="6" viewBox="0 0 9 6"><path d="M1 1 L4.5 4.5 L8 1" fill="none" stroke="#333" stroke-width="1"/></svg>
<div class="a" style="left:1453px;top:464px;width:19px;height:17px;background:#e8e8e8;border:1px solid #7a7a7a"></div>
<div class="t" style="left:1457px;top:469.4px;font-size:9px;color:#333">...</div>
<div class="t" style="left:1734px;top:467.8px;font-size:10.9px">DuckType:</div>
<div class="a" style="left:1790px;top:464px;width:70px;height:17px;background:linear-gradient(#f2f2f2,#e8e8e8);border:1px solid #c0c0c0"></div>
<svg class="a" style="left:1845px;top:470px;" width="9" height="6" viewBox="0 0 9 6"><path d="M1 1 L4.5 4.5 L8 1" fill="none" stroke="#333" stroke-width="1"/></svg>
<div class="a" style="left:1860px;top:464px;width:20px;height:17px;background:#e8e8e8;border:1px solid #7a7a7a"></div>
<div class="t" style="left:1864px;top:469.4px;font-size:9px;color:#333">...</div>
<div class="a" style="left:1323px;top:482px;width:75px;height:15px;background:#fff;border:1px solid #a0a0a0"></div>
<div class="t" style="left:1326px;top:484.7px;font-size:11px">10</div>
<div class="a" style="left:1323px;top:497px;width:75px;height:15px;background:#fff;border:1px solid #a0a0a0"></div>
<div class="t" style="left:1326px;top:499.7px;font-size:11px">5</div>
<div class="t" style="left:1403px;top:484.8px;font-size:10.9px">Column Width:</div>
<div class="t" style="left:1403px;top:499.8px;font-size:10.9px">Row Height:</div>
<div class="a" style="left:1503px;top:482px;width:75px;height:15px;background:#fff;border:1px solid #a0a0a0"></div>
<div class="t" style="left:1506px;top:484.7px;font-size:11px">50</div>
<div class="a" style="left:1503px;top:497px;width:75px;height:15px;background:#fff;border:1px solid #a0a0a0"></div>
<div class="t" style="left:1506px;top:499.7px;font-size:11px">20</div>
<div class="a" style="left:1584px;top:484px;width:13px;height:13px;border:1px solid #333;background:#fff"></div>
<div class="t" style="left:1603px;top:481.8px;font-size:10.9px">Hide Menubar</div>
<div class="a" style="left:1584px;top:498px;width:13px;height:13px;border:1px solid #333;background:#fff"></div>
<div class="t" style="left:1603px;top:497.8px;font-size:10.9px">Hide Sidebar</div>
<div class="a" style="left:1672px;top:498px;width:13px;height:13px;border:1px solid #333;background:#fff"></div>
<div class="t" style="left:1691px;top:497.8px;font-size:10.9px">Savebar (Save/Cancel in Menu)</div>
<div class="a" style="left:1323px;top:513px;width:557px;height:18px;background:#fff;border:1px solid #a0a0a0"></div>
<div class="t" style="left:1328px;top:515.7px;font-size:11px">DisplayOrderYBeforeX</div>
<svg class="a" style="left:1864px;top:519px;" width="9" height="6" viewBox="0 0 9 6"><path d="M1 1 L4.5 4.5 L8 1" fill="none" stroke="#333" stroke-width="1"/></svg>
<div class="a" style="left:1210px;top:554px;width:651px;height:16px;background:#fff;border:1px solid #a0a0a0"></div>
<div class="a" style="left:1210px;top:570px;width:651px;height:17px;background:#fff;border:1px solid #a0a0a0"></div>
<div class="a" style="left:1861px;top:554px;width:19px;height:16px;background:#e8e8e8;border:1px solid #7a7a7a"></div>
<div class="t" style="left:1865px;top:559.4px;font-size:9px;color:#333">...</div>
<div class="a" style="left:1861px;top:570px;width:19px;height:17px;background:#e8e8e8;border:1px solid #7a7a7a"></div>
<div class="t" style="left:1865px;top:575.4px;font-size:9px;color:#333">...</div>
<div class="a" style="left:1861px;top:588px;width:19px;height:15px;background:#e8e8e8;border:1px solid #7a7a7a"></div>
<div class="t" style="left:1865px;top:591.4px;font-size:9px;color:#333">...</div>
<div class="a" style="left:1210px;top:618px;width:651px;height:17px;background:#fff;border:1px solid #a0a0a0"></div>
<div class="a" style="left:1861px;top:618px;width:19px;height:17px;background:#e8e8e8;border:1px solid #7a7a7a"></div>
<div class="t" style="left:1865px;top:623.4px;font-size:9px;color:#333">...</div>
<div class="a" style="left:1210px;top:653px;width:594px;height:79px;background:#d3d3d3"></div>
<div class="a" style="left:1804px;top:653px;width:10px;height:280px;background:#e6e6e6"></div>
<div class="a" style="left:1440px;top:655px;width:60px;height:32px;background:#3263a8;border-radius:3px;box-shadow:1px 1px 3px rgba(0,0,0,.3)"></div>
<div class="a" style="left:1210px;top:732px;width:591px;height:26px;background:#fff;border:1px solid #c8c8c8;border-radius:0 5px 0 0"></div>
<div class="t" style="left:1497px;top:733.8px;font-size:11.5px;color:#555">Previous</div>
<div class="t" style="left:1497px;top:745.8px;font-size:11.5px;color:#555">Owner</div>
<svg class="a" style="left:1540px;top:738px;" width="9" height="9" viewBox="0 0 9 9"><path d="M0 1 H9 L5.5 5 V9 L3.5 8 V5 Z" fill="#ddd"/></svg>
<svg class="a" style="left:1774px;top:736px;" width="22" height="8" viewBox="0 0 22 8"><circle cx="3.5" cy="4" r="2.6" fill="#2a5ea8"/><circle cx="11" cy="4" r="2.6" fill="#2a5ea8"/><circle cx="18.5" cy="4" r="2.6" fill="#2a5ea8"/></svg>
<div class="a" style="left:1210px;top:757px;width:591px;height:174px;background:linear-gradient(90deg,#f4f4f4,#fff 10%);border-right:1px solid #c8c8c8;border-bottom:1px solid #c8c8c8;border-radius:0 0 4px 0"></div>
<svg class="a" style="left:1830px;top:647px;" width="10" height="7" viewBox="0 0 10 7"><path d="M1 6 L5 2 L9 6" fill="none" stroke="#aaa" stroke-width="1"/></svg>
<div class="a" style="left:1827px;top:660px;width:17px;height:257px;background:#c8c8c8"></div>
<svg class="a" style="left:1830px;top:930px;" width="10" height="7" viewBox="0 0 10 7"><path d="M1 1 L5 5 L9 1" fill="none" stroke="#aaa" stroke-width="1"/></svg>
<div class="a" style="left:1851px;top:641px;width:30px;height:304px;background:#dcdcdc"></div>
<div class="a" style="left:1851px;top:671.4px;width:30px;height:1px;background:#c4c4c4"></div>
<div class="a" style="left:1851px;top:701.8px;width:30px;height:1px;background:#c4c4c4"></div>
<div class="a" style="left:1851px;top:732.2px;width:30px;height:1px;background:#c4c4c4"></div>
<div class="a" style="left:1851px;top:762.6px;width:30px;height:1px;background:#c4c4c4"></div>
<div class="a" style="left:1851px;top:793.0px;width:30px;height:1px;background:#c4c4c4"></div>
<div class="a" style="left:1851px;top:823.4px;width:30px;height:1px;background:#c4c4c4"></div>
<div class="a" style="left:1851px;top:853.8px;width:30px;height:1px;background:#c4c4c4"></div>
<div class="a" style="left:1851px;top:884.2px;width:30px;height:1px;background:#c4c4c4"></div>
<div class="a" style="left:1851px;top:914.5999999999999px;width:30px;height:1px;background:#c4c4c4"></div>
<svg class="a" style="left:1851px;top:641.0px;" width="30" height="30" viewBox="0 0 30 30"><path d="M15 10.5 H8.5 V21.5 H21.5 V15" fill="none" stroke="#111" stroke-width="1.8"/><path d="M11.5 18.5 L12.3 15.5 L19.5 8.3 Q20.5 7.5 21.5 8.5 L22 9 Q22.7 10 22 10.8 L14.6 18 Z" fill="#111"/><path d="M12.3 16.8 L13.5 18" stroke="#dcdcdc" stroke-width=".8"/></svg>
<svg class="a" style="left:1851px;top:671.4px;" width="30" height="30" viewBox="0 0 30 30"><path d="M8 8 H22 V11.5 H20.5 L20 10 H16.5 V20 H18.5 V22 H11.5 V20 H13.5 V10 H10 L9.5 11.5 H8 Z" fill="#111"/></svg>
<svg class="a" style="left:1851px;top:701.8px;" width="30" height="30" viewBox="0 0 30 30"><rect x="10.5" y="11.5" width="9" height="8" fill="none" stroke="#111" stroke-width="1.6"/><path d="M12.5 15 L14.5 17.5 L20 10.5" fill="none" stroke="#111" stroke-width="1.8"/></svg>
<svg class="a" style="left:1851px;top:732.2px;" width="30" height="30" viewBox="0 0 30 30"><rect x="6.5" y="10.5" width="11" height="9" fill="none" stroke="#111" stroke-width="1.6"/><path d="M6.5 13.5 H17 M6.5 16.5 H17" stroke="#111" stroke-width="1.3"/><path d="M21 9 V19 M18.5 16.5 L21 19.5 L23.5 16.5" fill="none" stroke="#111" stroke-width="1.6"/></svg>
<svg class="a" style="left:1851px;top:762.6px;" width="30" height="30" viewBox="0 0 30 30"><rect x="7.5" y="10.5" width="15" height="12" fill="none" stroke="#111" stroke-width="1.6"/><path d="M7.5 14 H22.5" stroke="#111" stroke-width="2"/><path d="M10 16.5 H20 M10 18.5 H20 M10 20.5 H20" stroke="#111" stroke-width=".9" stroke-dasharray="1.5 .8"/><path d="M10 8 V11 M20 8 V11" stroke="#111" stroke-width="1.6"/></svg>
<svg class="a" style="left:1851px;top:793.0px;" width="30" height="30" viewBox="0 0 30 30"><rect x="8.5" y="9.5" width="13" height="13" fill="#fff" stroke="#111" stroke-width="2"/><circle cx="13.5" cy="13.5" r="1.8" fill="#222"/><circle cx="16.5" cy="13.5" r="1.8" fill="#222"/><circle cx="15" cy="15" r="2" fill="#222"/><path d="M11 20.5 Q12 16.5 15 18 Q18 16.5 19 20.5 Z" fill="#222"/></svg>
<svg class="a" style="left:1851px;top:823.4px;" width="30" height="30" viewBox="0 0 30 30"><rect x="7" y="11.5" width="16" height="8" rx="3" fill="#fff" stroke="#111" stroke-width="1.6"/><path d="M10.5 13.5 V17.5 M10.5 15.8 Q12.5 14.5 12.5 16.3 Q12.5 18 10.5 17 M14 14 V17.5 M13.2 15 H15 M16.3 15 V17.5 M16.3 15.6 Q18.5 14.2 18.5 16 V17.5" fill="none" stroke="#111" stroke-width=".9"/></svg>
<svg class="a" style="left:1851px;top:853.8px;" width="30" height="30" viewBox="0 0 30 30"><rect x="8.5" y="9.5" width="13" height="13" fill="#fff" stroke="#111" stroke-width="1.6"/><rect x="9.3" y="17" width="11.4" height="4.7" fill="#888"/><path d="M9.3 19.3 H20.7" stroke="#ccc" stroke-width=".8"/><path d="M11 11 V15.5 M12.8 13 V15.5 M12.8 11.5 V12 M14.5 15.3 Q16 15.8 16 14.6 Q16 13.8 14.8 13.6 Q14 13.2 14.8 12.7 Q15.5 12.6 16 13 M17.8 11.5 V15.5 M17 13 H18.8" fill="none" stroke="#111" stroke-width=".8"/></svg>
<svg class="a" style="left:1851px;top:884.2px;" width="30" height="30" viewBox="0 0 30 30"><path d="M15 9 L20.5 12 L15 15 L9.5 12 Z" fill="#111"/><path d="M9.5 12 L15 15 V21.5 L9.5 18.5 Z" fill="#888" stroke="#111" stroke-width=".8"/><path d="M20.5 12 L15 15 V21.5 L20.5 18.5 Z" fill="#bbb" stroke="#111" stroke-width=".8"/><path d="M8 10.5 Q5.5 15.5 8 20.5 M22 10.5 Q24.5 15.5 22 20.5" fill="none" stroke="#111" stroke-width="1.3"/></svg>
<svg class="a" style="left:1851px;top:914.5999999999999px;" width="30" height="30" viewBox="0 0 30 30"><rect x="7.5" y="7.5" width="15" height="14" rx="1.5" fill="#fff" stroke="#222" stroke-width="1.1"/><path d="M9 9.8 H13" stroke="#222" stroke-width="1.2"/><path d="M7.5 11.5 H22.5" stroke="#222" stroke-width=".8"/><rect x="9.5" y="13" width="11" height="10" fill="#fff" stroke="#222" stroke-width="1"/><circle cx="15" cy="18" r="2.6" fill="none" stroke="#111" stroke-width="1.2"/><path d="M10 15 V13.5 H12 M18 13.5 H20 V15 M20 21 V22.5 H18 M12 22.5 H10 V21" fill="none" stroke="#111" stroke-width="1.2"/></svg>
<div class="a" style="left:1470px;top:968px;width:17px;height:18px;background:#e1e1e1;border:1px solid #6f6f6f"></div>
<div class="a" style="left:1497px;top:968px;width:149px;height:18px;background:#e1e1e1;border:1px solid #6f6f6f"></div>
<div class="t" style="left:1499px;top:972.2px;font-size:11px">WebApp Prototype Edit-Mode</div>
<div class="a" style="left:58px;top:149px;width:1144px;height:928px;background:#f0f0f0;border:1px solid #b8b8b8;border-radius:8px;box-shadow:0 8px 28px rgba(0,0,0,.28);overflow:hidden"></div>
<div class="a" style="left:59px;top:150px;width:1142px;height:30px;background:#f3f3f3;border-radius:8px 8px 0 0"></div>
<div class="a" style="left:67px;top:156px;width:16px;height:16px;background:#fff;border-radius:4px"></div>
<svg class="a" style="left:67px;top:156px;" width="16" height="16" viewBox="0 0 16 16"><rect x="3.5" y="4.5" width="9" height="7" fill="none" stroke="#f5b870" stroke-width="1"/><path d="M3.5 6.5 H12.5" stroke="#f5b870"/><rect x="5" y="8" width="3" height="2.5" fill="#f5b870"/></svg>
<div class="t" style="left:89px;top:159.1px;font-size:11.74px;color:#7c7c7c">ViewModel Editor - PersonSeeker</div>
<div class="a" style="left:1082px;top:164px;width:10px;height:1px;background:#555"></div>
<div class="a" style="left:1127px;top:159px;width:10px;height:10px;border:1px solid #555"></div>
<svg class="a" style="left:1173px;top:159px;" width="11" height="11" viewBox="0 0 11 11"><path d="M.5 .5 L10.5 10.5 M10.5 .5 L.5 10.5" stroke="#555" stroke-width="1.1"/></svg>
<div class="t" style="left:75px;top:191.9px;font-size:10.73px">ViewModel under edit:</div>
<div class="a" style="left:184px;top:187px;width:363px;height:21px;background:#fff;border:1px solid #7a7a7a;border-radius:2px"></div>
<div class="t" style="left:187px;top:191.9px;font-size:10.74px">PersonSeeker : Person</div>
<svg class="a" style="left:531px;top:194px;" width="10" height="7" viewBox="0 0 10 7"><path d="M1 1 L5 5 L9 1" fill="none" stroke="#333" stroke-width="1.1"/></svg>
<div class="a" style="left:553px;top:190px;width:13px;height:13px;background:#005fb8;border-radius:3px"></div>
<svg class="a" style="left:553px;top:190px;" width="13" height="13" viewBox="0 0 13 13"><path d="M3 6.5 L5.5 9 L10 4" fill="none" stroke="#fff" stroke-width="1.3"/></svg>
<div class="t" style="left:571px;top:191.5px;font-size:11.2px">Categ</div>
<div class="a" style="left:609px;top:186px;width:95px;height:21px;background:#fdfdfd;border:1px solid #d0d0d0;font-size:10.9px;line-height:19px;color:#000;text-align:center;border-radius:4px;white-space:nowrap;overflow:hidden">Add ViewModel</div>
<div class="a" style="left:713px;top:186px;width:96px;height:21px;background:#fdfdfd;border:1px solid #d0d0d0;font-size:10.9px;line-height:19px;color:#000;text-align:center;border-radius:4px;white-space:nowrap;overflow:hidden">Action definitions</div>
<div class="a" style="left:818px;top:186px;width:96px;height:21px;background:#fdfdfd;border:1px solid #d0d0d0;font-size:10.9px;line-height:19px;color:#000;text-align:center;border-radius:4px;white-space:nowrap;overflow:hidden">New Editor</div>
<div class="a" style="left:923px;top:186px;width:96px;height:21px;background:#fdfdfd;border:1px solid #d0d0d0;font-size:10.9px;line-height:19px;color:#000;text-align:center;border-radius:4px;white-space:nowrap;overflow:hidden">Action CrossRef</div>
<div class="t" style="left:65px;top:230.6px;font-size:7.6px">Filter:</div>
<div class="a" style="left:87px;top:226px;width:250px;height:14px;background:#fff;border:1px solid #7a7a7a"></div>
<div class="t" style="left:341px;top:230.3px;font-size:7.95px;color:#0000ff">Person  PersonSeeker</div>
<div class="a" style="left:65px;top:243px;width:503px;height:736px;background:#fff"></div>
<div class="a" style="left:65px;top:243px;width:1px;height:806px;background:#a0a0a0"></div>
<div class="a" style="left:568px;top:243px;width:15px;height:736px;background:#f0f0f0"></div>
<div class="a" style="left:568px;top:301px;width:14px;height:660px;background:#cdcdcd"></div>
<svg class="a" style="left:570px;top:247px;" width="10" height="8" viewBox="0 0 10 8"><path d="M1 6 L5 2 L9 6" fill="none" stroke="#888" stroke-width="1"/></svg>
<svg class="a" style="left:570px;top:967px;" width="10" height="8" viewBox="0 0 10 8"><path d="M1 2 L5 6 L9 2" fill="none" stroke="#888" stroke-width="1"/></svg>
<div class="a" style="left:66px;top:979px;width:517px;height:18px;background:#f0f0f0"></div>
<div class="a" style="left:82px;top:981px;width:308px;height:15px;background:#c8c8c8"></div>
<svg class="a" style="left:69px;top:984px;" width="8" height="10" viewBox="0 0 8 10"><path d="M6 1 L2 5 L6 9" fill="none" stroke="#888" stroke-width="1"/></svg>
<svg class="a" style="left:555px;top:984px;" width="8" height="10" viewBox="0 0 8 10"><path d="M2 1 L6 5 L2 9" fill="none" stroke="#888" stroke-width="1"/></svg>
<div class="a" style="left:65px;top:997px;width:518px;height:3px;background:#a0a0a0"></div>
<div class="a" style="left:65px;top:1000px;width:518px;height:49px;background:#fff;border:1px solid #a0a0a0"></div>
<div class="a" style="left:582px;top:243px;width:3px;height:806px;background:#a8a8a8"></div>
<div class="a" style="left:92px;top:243px;width:341px;height:285px;background:#90ee90;border-radius:0 0 3px 3px"></div>
<div class="t" style="left:97.5px;top:244.8px;font-size:10.83px;color:#222;font-weight:bold">CodeComment</div>
<div class="t" style="left:97.5px;top:257.8px;font-size:12px">&lt;Write a line on why this ViewModel exists&gt;</div>
<div class="a" style="left:97px;top:270px;width:99px;height:14px;background:#e1e1e1;border:1px solid #6f6f6f;font-size:8.9px;line-height:12px;color:#000;text-align:center;padding:0 1px;text-align:left;letter-spacing:-.1px;white-space:nowrap;overflow:hidden">Add column from model</div>
<div class="a" style="left:103px;top:290.5px;width:5px;height:4px;background:#c8c8c8;border-radius:2px"></div>
<div class="a" style="left:103px;top:296.5px;width:5px;height:4px;background:#c8c8c8;border-radius:2px"></div>
<div class="a" style="left:108px;top:291px;width:9.6px;height:9.4px;background:#fff;border-radius:2.5px"></div>
<svg class="a" style="left:108px;top:291px;" width="10" height="10" viewBox="0 0 10 10"><path d="M2.6 7.6 L4.8 2.2 L7 7.6 M3.5 5.6 H6.1" fill="none" stroke="#f08c00" stroke-width="1"/><circle cx="4.8" cy="2.6" r=".9" fill="#f08c00"/></svg>
<div class="t" style="left:118.5px;top:289.7px;font-size:10.93px">Filter : vSeekParam</div>
<div class="a" style="left:103px;top:308.5px;width:5px;height:4px;background:#c8c8c8;border-radius:2px"></div>
<div class="a" style="left:103px;top:314.5px;width:5px;height:4px;background:#c8c8c8;border-radius:2px"></div>
<div class="a" style="left:108px;top:309px;width:9.6px;height:9.4px;background:#fff;border-radius:2.5px"></div>
<svg class="a" style="left:108px;top:309px;" width="10" height="10" viewBox="0 0 10 10"><circle cx="4" cy="4" r="2.3" fill="none" stroke="#f5a12a" stroke-width=".9" stroke-dasharray="1 .7"/><circle cx="6.8" cy="6.8" r="1.9" fill="none" stroke="#c0c0c0" stroke-width=".8"/></svg>
<div class="t" style="left:118.5px;top:308.7px;font-size:10.93px">Search : EAL: vSeekIntValue:=Integer.Parse(vSeekParam);</div>
<div class="t" style="left:162px;top:321.2px;font-size:10.93px">vSeekParamWildcard:='%'+vSeekParam+'%';</div>
<div class="t" style="left:162px;top:333.7px;font-size:10.93px">selfVM.Search</div>
<div class="a" style="left:103px;top:351.5px;width:5px;height:4px;background:#c8c8c8;border-radius:2px"></div>
<div class="a" style="left:103px;top:357.5px;width:5px;height:4px;background:#c8c8c8;border-radius:2px"></div>
<div class="a" style="left:108px;top:352px;width:9.6px;height:9.4px;background:#fff;border-radius:2.5px"></div>
<svg class="a" style="left:108px;top:352px;" width="10" height="10" viewBox="0 0 10 10"><path d="M2 8.5 L7.5 2.5 M4.5 2.5 H7.5 V5.5" fill="none" stroke="#f08c00" stroke-width="1.1"/></svg>
<div class="t" style="left:118.5px;top:351.7px;font-size:10.93px">Results : vSeekerResult</div>
<svg class="a" style="left:73px;top:363px;" width="8" height="8" viewBox="0 0 8 8"><path d="M7 0 L7 7 L0 7 Z" fill="#444"/></svg>
<div class="a" style="left:427px;top:357px;width:15px;height:1px;background:#333"></div>
<div class="a" style="left:441px;top:357px;width:1px;height:197px;background:#333"></div>
<div class="a" style="left:376px;top:553px;width:66px;height:1px;background:#333"></div>
<svg class="a" style="left:370px;top:548px;" width="9" height="11" viewBox="0 0 9 11"><path d="M0 5.5 L9 0 L9 11 Z" fill="#000"/></svg>
<div class="a" style="left:100px;top:371px;width:71px;height:23px;background:#fff5a6"></div>
<div class="t" style="left:103px;top:378.0px;font-size:10.6px;color:#000;font-weight:bold">Actions</div>
<svg class="a" style="left:146px;top:374px;" width="19" height="19" viewBox="0 0 19 19"><circle cx="9" cy="9" r="8.2" fill="#fff" stroke="#333" stroke-width="1.1"/><path d="M5.8 7.6 L9 10.8 L12.2 7.6" fill="none" stroke="#111" stroke-width="2.1"/></svg>
<div class="a" style="left:100px;top:393px;width:325px;height:103px;background:#fff5a6"></div>
<div class="t" style="left:100px;top:394.1px;font-size:10.57px;color:#000;font-weight:bold">Actions leading here</div>
<div class="a" style="left:100px;top:406px;width:90px;height:14px;background:#e1e1e1;border:1px solid #6f6f6f;font-size:9.1px;line-height:12px;color:#000;text-align:center;padding:0 1px;text-align:left;letter-spacing:-.1px;white-space:nowrap;overflow:hidden">Class Action for show</div>
<div class="a" style="left:190px;top:406px;width:94px;height:14px;background:#e1e1e1;border:1px solid #6f6f6f;font-size:9.1px;line-height:12px;color:#000;text-align:center;padding:0 1px;text-align:left;letter-spacing:-.1px;white-space:nowrap;overflow:hidden">Global Action for show</div>
<div class="a" style="left:284px;top:406px;width:95px;height:14px;background:#e1e1e1;border:1px solid #6f6f6f;font-size:9.1px;line-height:12px;color:#000;text-align:center;padding:0 1px;text-align:left;letter-spacing:-.1px;white-space:nowrap;overflow:hidden">Global Action + Create</div>
<div class="t" style="left:100px;top:420.7px;font-size:10.98px;color:#0000ee;text-decoration:underline">IControlTheMenuGrouping/AtAllLevels/PersonSeekerIAmInControl</div>
<div class="t" style="left:100px;top:433.2px;font-size:10.98px;color:#0000ee;text-decoration:underline">VM:AutoFormCar AutoForms/SingleLinkSwitchPreviousOwner</div>
<div class="t" style="left:100px;top:445.7px;font-size:10.98px;color:#0000ee;text-decoration:underline">IControlTheMenuGrouping/AtAllLevels/PersonSeekerAgain</div>
<div class="a" style="left:100px;top:467px;width:54px;height:14px;background:#e1e1e1;border:1px solid #6f6f6f;font-size:9.1px;line-height:12px;color:#000;text-align:center;padding:0 1px;text-align:left;letter-spacing:-.1px;white-space:nowrap;overflow:hidden">Class Action</div>
<div class="a" style="left:154px;top:467px;width:75px;height:14px;background:#e1e1e1;border:1px solid #6f6f6f;font-size:9.1px;line-height:12px;color:#000;text-align:center;padding:0 1px;text-align:left;letter-spacing:-.1px;white-space:nowrap;overflow:hidden">ViewModel Action</div>
<div class="t" style="left:109px;top:482.7px;font-size:10.98px;color:#0000ee;text-decoration:underline">NewPerson</div>
<div class="a" style="left:167px;top:481px;width:13px;height:14px;background:#e8e8e8;border:1px solid #888"></div>
<div class="a" style="left:171px;top:486px;width:5px;height:4px;background:#f0c080"></div>
<div class="a" style="left:100px;top:502px;width:160px;height:23px;background:#25c9b9"></div>
<div class="t" style="left:103px;top:508.0px;font-size:10.6px;color:#000;font-weight:bold">Variables and Validations</div>
<svg class="a" style="left:234px;top:504px;" width="19" height="19" viewBox="0 0 19 19"><circle cx="9" cy="9" r="8.2" fill="#fff" stroke="#333" stroke-width="1.1"/><path d="M5.8 7.6 L9 10.8 L12.2 7.6" fill="none" stroke="#111" stroke-width="2.1"/></svg>
<div class="a" style="left:111px;top:539px;width:255px;height:167px;background:#add8e6;border-radius:3px"></div>
<div class="t" style="left:116px;top:544.5px;font-size:15.9px">Person : Person</div>
<div class="t" style="left:136px;top:562.7px;font-size:10.99px;color:#0000ff">TV: IsSeekerResultGrid: true, MultiSelect: true</div>
<div class="a" style="left:116px;top:575px;width:99px;height:13px;background:#e1e1e1;border:1px solid #6f6f6f;font-size:8.9px;line-height:11px;color:#000;text-align:center;padding:0 1px;text-align:left;letter-spacing:-.1px;white-space:nowrap;overflow:hidden">Add column from model</div>
<div class="a" style="left:122px;top:593.5px;width:5px;height:4px;background:#ffec00;border-radius:2px"></div>
<div class="a" style="left:122px;top:599.5px;width:5px;height:4px;background:#cfcfcf;border-radius:2px"></div>
<div class="a" style="left:127px;top:594px;width:9.6px;height:9.4px;background:#fff;border-radius:2.5px"></div>
<svg class="a" style="left:127px;top:594px;" width="10" height="10" viewBox="0 0 10 10"><path d="M2.6 7.6 L4.8 2.2 L7 7.6 M3.5 5.6 H6.1" fill="none" stroke="#f08c00" stroke-width="1"/><circle cx="4.8" cy="2.6" r=".9" fill="#f08c00"/></svg>
<div class="t" style="left:137px;top:594.7px;font-size:10.99px">AsString : self.asString</div>
<div class="a" style="left:122px;top:611.5px;width:5px;height:4px;background:#ffec00;border-radius:2px"></div>
<div class="a" style="left:122px;top:617.5px;width:5px;height:4px;background:#cfcfcf;border-radius:2px"></div>
<div class="a" style="left:127px;top:612px;width:9.6px;height:9.4px;background:#fff;border-radius:2.5px"></div>
<svg class="a" style="left:127px;top:612px;" width="10" height="10" viewBox="0 0 10 10"><path d="M2.6 7.6 L4.8 2.2 L7 7.6 M3.5 5.6 H6.1" fill="none" stroke="#f08c00" stroke-width="1"/><circle cx="4.8" cy="2.6" r=".9" fill="#f08c00"/></svg>
<div class="t" style="left:137px;top:612.7px;font-size:10.99px">Age : self.Age</div>
<div class="a" style="left:122px;top:629.5px;width:5px;height:4px;background:#ffec00;border-radius:2px"></div>
<div class="a" style="left:122px;top:635.5px;width:5px;height:4px;background:#cfcfcf;border-radius:2px"></div>
<div class="a" style="left:127px;top:630px;width:9.6px;height:9.4px;background:#fff;border-radius:2.5px"></div>
<svg class="a" style="left:127px;top:630px;" width="10" height="10" viewBox="0 0 10 10"><path d="M2.6 7.6 L4.8 2.2 L7 7.6 M3.5 5.6 H6.1" fill="none" stroke="#f08c00" stroke-width="1"/><circle cx="4.8" cy="2.6" r=".9" fill="#f08c00"/></svg>
<div class="t" style="left:137px;top:630.7px;font-size:10.99px">Name : self.Name</div>
<div class="a" style="left:119px;top:651px;width:239px;height:47px;background:#fff5a6"></div>
<div class="a" style="left:119px;top:651px;width:53px;height:14px;background:#e1e1e1;border:1px solid #6f6f6f;font-size:9.1px;line-height:12px;color:#000;text-align:center;padding:0 1px;text-align:left;letter-spacing:-.1px;white-space:nowrap;overflow:hidden">Class Action</div>
<div class="a" style="left:172px;top:651px;width:76px;height:14px;background:#e1e1e1;border:1px solid #6f6f6f;font-size:9.1px;line-height:12px;color:#000;text-align:center;padding:0 1px;text-align:left;letter-spacing:-.1px;white-space:nowrap;overflow:hidden">ViewModel Action</div>
<div class="t" style="left:128px;top:665.7px;font-size:10.98px;color:#0000ee;text-decoration:underline">ShowPerson</div>
<div class="a" style="left:190px;top:666px;width:14px;height:14px;background:#e8e8e8;border:1px solid #888"></div>
<div class="a" style="left:194px;top:671px;width:6px;height:4px;background:#f5d0a0"></div>
<div class="a" style="left:204px;top:665px;width:39px;height:16px;background:#e1e1e1;border:1px solid #6f6f6f;font-size:10.9px;line-height:14px;color:#000;text-align:center;padding:0 1px;text-align:left;letter-spacing:-.1px;white-space:nowrap;overflow:hidden">opt-out</div>
<div class="t" style="left:246px;top:665.7px;font-size:10.98px">(Person)</div>
<div class="t" style="left:128px;top:682.7px;font-size:10.98px;color:#0000ee;text-decoration:underline">ShowPersonIAmInControl</div>
<div class="a" style="left:255px;top:682px;width:14px;height:15px;background:#e8e8e8;border:1px solid #888"></div>
<div class="a" style="left:259px;top:687px;width:6px;height:2px;background:#f5d0a0"></div>
<div class="a" style="left:269px;top:682px;width:38px;height:16px;background:#e1e1e1;border:1px solid #6f6f6f;font-size:10.9px;line-height:14px;color:#000;text-align:center;padding:0 1px;text-align:left;letter-spacing:-.1px;white-space:nowrap;overflow:hidden">opt-out</div>
<div class="t" style="left:310px;top:682.7px;font-size:10.98px">(Person)</div>
<div class="a" style="left:111px;top:716px;width:457px;height:83px;background:#ffa07a;border-radius:3px 0 0 3px"></div>
<div class="t" style="left:116px;top:723.5px;font-size:15.9px">seekName : Person</div>
<div class="t" style="left:136px;top:739.7px;font-size:10.99px;color:#0000ff">TV: Eco.HiliteGridColumn: Person.Name</div>
<div class="a" style="left:116px;top:752px;width:99px;height:13px;background:#e1e1e1;border:1px solid #6f6f6f;font-size:8.9px;line-height:11px;color:#000;text-align:center;padding:0 1px;text-align:left;letter-spacing:-.1px;white-space:nowrap;overflow:hidden">Add column from model</div>
<div class="a" style="left:122px;top:771.5px;width:5px;height:4px;background:#cfcfcf;border-radius:2px"></div>
<div class="a" style="left:122px;top:777.5px;width:5px;height:4px;background:#ffec00;border-radius:2px"></div>
<div class="a" style="left:127px;top:772px;width:9.6px;height:9.4px;background:#fff;border-radius:2.5px"></div>
<svg class="a" style="left:127px;top:772px;" width="10" height="10" viewBox="0 0 10 10"><path d="M2.6 7.6 L4.8 2.2 L7 7.6 M3.5 5.6 H6.1" fill="none" stroke="#f08c00" stroke-width="1"/><circle cx="4.8" cy="2.6" r=".9" fill="#f08c00"/></svg>
<div class="t" style="left:137px;top:771.7px;font-size:10.99px">Crit1 : Person.allinstances-&gt;select(a|a.Name.sqllikecaseinsensitive(vSeekParamWildcard))</div>
<div class="a" style="left:111px;top:810px;width:333px;height:82px;background:#ffa07a;border-radius:3px"></div>
<div class="t" style="left:116px;top:816.5px;font-size:15.9px">seekcrit : Person</div>
<div class="t" style="left:136px;top:832.7px;font-size:10.99px;color:#0000ff">TV: Eco.HiliteGridColumn:</div>
<div class="a" style="left:116px;top:845px;width:99px;height:14px;background:#e1e1e1;border:1px solid #6f6f6f;font-size:8.9px;line-height:12px;color:#000;text-align:center;padding:0 1px;text-align:left;letter-spacing:-.1px;white-space:nowrap;overflow:hidden">Add column from model</div>
<div class="a" style="left:122px;top:864.5px;width:5px;height:4px;background:#cfcfcf;border-radius:2px"></div>
<div class="a" style="left:122px;top:870.5px;width:5px;height:4px;background:#ffec00;border-radius:2px"></div>
<div class="a" style="left:127px;top:865px;width:9.6px;height:9.4px;background:#fff;border-radius:2.5px"></div>
<svg class="a" style="left:127px;top:865px;" width="10" height="10" viewBox="0 0 10 10"><path d="M2.6 7.6 L4.8 2.2 L7 7.6 M3.5 5.6 H6.1" fill="none" stroke="#f08c00" stroke-width="1"/><circle cx="4.8" cy="2.6" r=".9" fill="#f08c00"/></svg>
<div class="t" style="left:137px;top:865.7px;font-size:10.99px">Crit1 : Person.allinstances-&gt;select(p|p.Age&gt;=vSeekIntValue)</div>
<div class="a" style="left:111px;top:902px;width:457px;height:71px;background:#ffa07a;border-radius:3px 0 0 3px"></div>
<div class="t" style="left:116px;top:909.0px;font-size:15.9px">SearchExpression : Person</div>
<div class="a" style="left:116px;top:926px;width:99px;height:14px;background:#e1e1e1;border:1px solid #6f6f6f;font-size:8.9px;line-height:12px;color:#000;text-align:center;padding:0 1px;text-align:left;letter-spacing:-.1px;white-space:nowrap;overflow:hidden">Add column from model</div>
<div class="a" style="left:117px;top:943px;width:445px;height:18px;background:#f5aa88;border:1px solid #f8c8b0"></div>
<div class="a" style="left:122px;top:945.5px;width:5px;height:4px;background:#cfcfcf;border-radius:2px"></div>
<div class="a" style="left:122px;top:951.5px;width:5px;height:4px;background:#ffec00;border-radius:2px"></div>
<div class="a" style="left:127px;top:946px;width:9.6px;height:9.4px;background:#fff;border-radius:2.5px"></div>
<svg class="a" style="left:127px;top:946px;" width="10" height="10" viewBox="0 0 10 10"><path d="M2.6 7.6 L4.8 2.2 L7 7.6 M3.5 5.6 H6.1" fill="none" stroke="#f08c00" stroke-width="1"/><circle cx="4.8" cy="2.6" r=".9" fill="#f08c00"/></svg>
<div class="t" style="left:137px;top:946.7px;font-size:10.99px">Crit1 : Person.allinstances-&gt;select(a|a.Name.sqllikecaseinsensitive(vSeekParam+'%'))</div>
<div class="a" style="left:568px;top:243px;width:15px;height:736px;background:#f0f0f0"></div>
<div class="a" style="left:568px;top:301px;width:14px;height:660px;background:#cdcdcd"></div>
<svg class="a" style="left:570px;top:247px;" width="10" height="8" viewBox="0 0 10 8"><path d="M1 6 L5 2 L9 6" fill="none" stroke="#888" stroke-width="1"/></svg>
<svg class="a" style="left:570px;top:967px;" width="10" height="8" viewBox="0 0 10 8"><path d="M1 2 L5 6 L9 2" fill="none" stroke="#888" stroke-width="1"/></svg>
<div class="a" style="left:582px;top:243px;width:3px;height:806px;background:#a8a8a8"></div>
<div class="a" style="left:1153px;top:223px;width:37px;height:19px;background:#90ee90"></div>
<div class="t" style="left:1155px;top:227.7px;font-size:11px;color:#000">UIFirst</div>
<div class="t" style="left:590px;top:248.8px;font-size:10.9px">Use placing hints:</div>
<div class="t" style="left:590px;top:265.8px;font-size:10.9px">CodeGen :</div>
<div class="a" style="left:701px;top:249px;width:14px;height:14px;border:1px solid #333;background:#fff"></div>
<svg class="a" style="left:701px;top:249px" width="14" height="14"><path d="M2.5 6.5 L5.2 9.5 L10.5 3" stroke="#222" stroke-width="2.1" fill="none"/></svg>
<div class="a" style="left:701px;top:265px;width:14px;height:14px;border:1px solid #333;background:#fff"></div>
<div class="a" style="left:1111px;top:249px;width:14px;height:14px;border:1px solid #333;background:#fff"></div>
<svg class="a" style="left:1111px;top:249px" width="14" height="14"><path d="M2.5 6.5 L5.2 9.5 L10.5 3" stroke="#222" stroke-width="2.1" fill="none"/></svg>
<div class="t" style="left:1130px;top:248.8px;font-size:10.9px">Label on top</div>
<div class="a" style="left:1009px;top:264px;width:75px;height:16px;background:#e1e1e1;border:1px solid #6f6f6f;font-size:10.9px;line-height:14px;color:#000;text-align:center;padding:0 1px;text-align:left;letter-spacing:-.1px;white-space:nowrap;overflow:hidden">Tagged values</div>
<div class="a" style="left:1084px;top:264px;width:106px;height:16px;background:#e1e1e1;border:1px solid #6f6f6f;font-size:10.9px;line-height:14px;color:#000;text-align:center;padding:0 1px;text-align:left;letter-spacing:-.1px;white-space:nowrap;overflow:hidden">Analyze expressions</div>
<div class="a" style="left:586px;top:285px;width:609px;height:17px;background:#ffa07a"></div>
<div class="t" style="left:588px;top:286.7px;font-size:13.96px">Search Expression Criteria - active criterias are intersected</div>
<svg class="a" style="left:587px;top:305px;" width="19" height="19" viewBox="0 0 19 19"><circle cx="9" cy="9" r="8.2" fill="#fff" stroke="#333" stroke-width="1.1"/><path d="M5.8 10.6 L9 7.4 L12.2 10.6" fill="none" stroke="#111" stroke-width="2.1"/></svg>
<div class="t" style="left:610px;top:308.7px;font-size:11px">Properties</div>
<div class="t" style="left:591px;top:331.8px;font-size:10.9px">Name:</div>
<div class="t" style="left:591px;top:346.8px;font-size:10.9px">Search Expression:</div>
<div class="t" style="left:591px;top:362.8px;font-size:10.9px">Active Expression:</div>
<div class="a" style="left:701px;top:329px;width:488px;height:15px;background:#fff;border:1px solid #a0a0a0"></div>
<div class="t" style="left:704px;top:331.7px;font-size:11px">Crit1</div>
<div class="a" style="left:701px;top:343px;width:469px;height:17px;background:#fff;border:1px solid #a0a0a0"></div>
<div class="t" style="left:704px;top:346.7px;font-size:11px">Person.allinstances-&gt;select(a|a.Name.sqllikecaseinsensitive(vSeekParam+'%'))</div>
<div class="a" style="left:1169px;top:343px;width:20px;height:17px;background:#e8e8e8;border:1px solid #7a7a7a"></div>
<div class="t" style="left:1174px;top:349.4px;font-size:9px;color:#333">...</div>
<div class="a" style="left:701px;top:359px;width:469px;height:18px;background:#fff;border:1px solid #a0a0a0"></div>
<div class="a" style="left:1169px;top:360px;width:20px;height:17px;background:#e8e8e8;border:1px solid #7a7a7a"></div>
<div class="t" style="left:1174px;top:365.4px;font-size:9px;color:#333">...</div>
<div class="a" style="left:1158px;top:383px;width:35px;height:152px;background:#dcdcdc"></div>
<div class="a" style="left:1158px;top:418px;width:35px;height:1px;background:#c4c4c4"></div>
<div class="a" style="left:1158px;top:453px;width:35px;height:1px;background:#c4c4c4"></div>
<div class="a" style="left:1158px;top:488px;width:35px;height:1px;background:#c4c4c4"></div>
<div class="a" style="left:1158px;top:523px;width:35px;height:1px;background:#c4c4c4"></div>
<svg class="a" style="left:1158px;top:383px;" width="35" height="35" viewBox="0 0 35 35"><path d="M17.5 11.5 H9.5 V24.5 H24.5 V17.5" fill="none" stroke="#111" stroke-width="2"/><path d="M13 21.5 L14 17.8 L22.5 9.3 Q23.5 8.4 24.6 9.4 L25.2 10 Q26.1 11 25.2 12 L16.7 20.5 Z" fill="#111"/><path d="M14 19.6 L15 20.6" stroke="#dcdcdc" stroke-width=".9"/></svg>
<svg class="a" style="left:1158px;top:418px;" width="35" height="35" viewBox="0 0 35 35"><path d="M9 10 H26 V14 H24 L23.5 12 H19.5 V24 H21.5 V26 H13.5 V24 H15.5 V12 H11.5 L11 14 H9 Z" fill="#111"/></svg>
<svg class="a" style="left:1158px;top:453px;" width="35" height="35" viewBox="0 0 35 35"><rect x="11.5" y="13.5" width="11" height="10" fill="none" stroke="#111" stroke-width="1.8"/><path d="M14 17.5 L16.5 20.5 L23 12" fill="none" stroke="#111" stroke-width="2"/></svg>
<svg class="a" style="left:1158px;top:488px;" width="35" height="35" viewBox="0 0 35 35"><rect x="8.5" y="12.5" width="13" height="10" fill="none" stroke="#111" stroke-width="1.8"/><path d="M8.5 16 H21 M8.5 19.5 H21" stroke="#111" stroke-width="1.5"/><path d="M24.5 11 V22 M21.5 19 L24.5 22.5 L27.5 19" fill="none" stroke="#111" stroke-width="1.8"/></svg>
<svg class="a" style="left:1158px;top:523px;" width="35" height="12" viewBox="0 0 35 12"><rect x="10" y="8" width="15" height="10" fill="none" stroke="#111" stroke-width="1.8"/><path d="M13 6 V9 M22 6 V9" stroke="#111" stroke-width="1.8"/></svg>
<div class="a" style="left:597px;top:543px;width:80px;height:4px;background:#c8c8c8"></div>
<div class="a" style="left:597px;top:547px;width:83px;height:30px;background:#fff;border-bottom:1px solid #555"></div>
<div class="t" style="left:602px;top:548.7px;font-size:9.8px;color:#888">Filter</div>
<div class="a" style="left:597px;top:577px;width:80px;height:46px;background:#d3d3d3"></div>
<div class="t" style="left:607px;top:601.0px;font-size:16.5px;color:#111">Results</div>
<div class="a" style="left:597px;top:623px;width:83px;height:25px;background:#fff;border:1px solid #c8c8c8;border-radius:5px 0 0 0"></div>
<div class="t" style="left:602px;top:628.8px;font-size:11.5px;color:#555">As String</div>
<svg class="a" style="left:657px;top:630px;" width="9" height="9" viewBox="0 0 9 9"><path d="M0 1 H9 L5.5 5 V9 L3.5 8 V5 Z" fill="#ddd"/></svg>
<div class="a" style="left:597px;top:648px;width:83px;height:173px;background:linear-gradient(90deg,#fff,#f6f6f6);border-left:1px solid #c8c8c8;border-bottom:1px solid #c8c8c8"></div>
<div class="a" style="left:597px;top:821px;width:80px;height:11px;background:#e2e2e2"></div>
<svg class="a" style="left:591px;top:993px;" width="8" height="10" viewBox="0 0 8 10"><path d="M6 1 L2 5 L6 9" fill="none" stroke="#888" stroke-width="1"/></svg>
<div class="a" style="left:604px;top:990px;width:70px;height:16px;background:#c8c8c8"></div>
<div class="a" style="left:586px;top:1013px;width:14px;height:14px;border:1px solid #333;background:#fff"></div>
<div class="t" style="left:605px;top:1013.2px;font-size:11px">Show grid lines</div>
<div class="a" style="left:683px;top:1013px;width:14px;height:14px;border:1px solid #333;background:#fff"></div>
<div class="t" style="left:702px;top:1013.2px;font-size:11px">Show tab order</div>
<div class="a" style="left:780px;top:1013px;width:17px;height:18px;background:#d8d8d8;border:1px solid #888"></div>
<div class="t" style="left:782px;top:1018.5px;font-size:10px">Fit</div>
<div class="t" style="left:585px;top:1038.7px;font-size:7.5px">Screen size marker</div>
<div class="a" style="left:654px;top:1036px;width:19px;height:12px;background:#fff;border:1px solid #c8c8c8"></div>
<div class="t" style="left:656px;top:1038.4px;font-size:7.8px">758</div>
<div class="t" style="left:674px;top:1038.4px;font-size:7.8px">X</div>
<div class="a" style="left:678px;top:1036px;width:19px;height:12px;background:#fff;border:1px solid #c8c8c8"></div>
<div class="t" style="left:680px;top:1038.4px;font-size:7.8px">600</div>
<div class="t" style="left:698px;top:1038.7px;font-size:7.5px">SuggestedZoom</div>
<div class="a" style="left:757px;top:1036px;width:30px;height:12px;background:#f0f0f0;border:1px solid #c8c8c8"></div>
<div class="a" style="left:786px;top:1033px;width:80px;height:17px;background:#e1e1e1;border:1px solid #6f6f6f"></div>
<div class="t" style="left:789px;top:1038.7px;font-size:7.5px">Set shrink zoom to fit</div>
<div class="a" style="left:875px;top:1032px;width:150px;height:18px;background:#e1e1e1;border:1px solid #6f6f6f"></div>
<div class="t" style="left:877px;top:1036.2px;font-size:11px">WebApp Prototype Edit-Mode</div>
<div class="a" style="left:672px;top:534px;width:812px;height:487px;background:#f0f0f0;border:1px solid #b8b8b8;border-radius:8px;box-shadow:0 8px 30px rgba(0,0,0,.32);overflow:hidden"></div>
<div class="a" style="left:673px;top:535px;width:810px;height:33px;background:#f3f3f3;border-radius:8px 8px 0 0"></div>
<div class="a" style="left:681px;top:541px;width:16px;height:16px;background:#fff;border-radius:4px"></div>
<svg class="a" style="left:681px;top:541px;" width="16" height="16" viewBox="0 0 16 16"><circle cx="8" cy="8" r="4.5" fill="none" stroke="#bbb" stroke-width="1"/><path d="M5.5 8 L7.5 10 L11 5.5" fill="none" stroke="#f5a12a" stroke-width="1.4"/></svg>
<div class="t" style="left:702px;top:544.1px;font-size:11.74px;color:#7c7c7c">Ocl-PS Editor Crit1 view model column</div>
<div class="a" style="left:1364px;top:549px;width:10px;height:1px;background:#555"></div>
<div class="a" style="left:1409px;top:544px;width:10px;height:10px;border:1px solid #555"></div>
<svg class="a" style="left:1455px;top:544px;" width="11" height="11" viewBox="0 0 11 11"><path d="M.5 .5 L10.5 10.5 M10.5 .5 L.5 10.5" stroke="#555" stroke-width="1.1"/></svg>
<div class="a" style="left:675px;top:568px;width:531px;height:267px;background:#fff"></div>
<div class="t" style="left:680px;top:571.0px;font-size:13px;color:#2b91af;font-family:'Liberation Mono',monospace">Person</div>
<div class="t" style="left:726.5px;top:571.0px;font-size:13px;color:#111;font-family:'Liberation Mono',monospace">.allinstances</div>
<div class="a" style="left:1046px;top:818px;width:130px;height:14px;background:#fff;border:1px solid #7a7a7a"></div>
<div class="t" style="left:1056px;top:820.6px;font-size:10.5px;color:#c8c8c8">Search in expression</div>
<div class="a" style="left:675px;top:835px;width:531px;height:3px;background:#a8a8a8"></div>
<div class="a" style="left:1206px;top:568px;width:4px;height:420px;background:#a8a8a8"></div>
<div class="a" style="left:1210px;top:568px;width:270px;height:267px;background:#fff"></div>
<div class="a" style="left:1206px;top:835px;width:274px;height:3px;background:#a8a8a8"></div>
<svg class="a" style="left:1217px;top:574px;" width="8" height="7" viewBox="0 0 8 7"><path d="M7 0 L7 7 L0 7 Z" fill="#333"/></svg>
<div class="t" style="left:1231px;top:569.6px;font-size:10.5px;color:#a8b4c4;font-weight:bold">Operations</div>
<div class="a" style="left:1253px;top:585px;width:58px;height:16px;background:#ffff80"></div>
<div class="t" style="left:1250px;top:586.2px;font-size:11px;color:#000">.allInstances</div>
<div class="t" style="left:1313px;top:586.2px;font-size:11px;color:#c8c8c8">: &lt;Any&gt;</div>
<div class="a" style="left:678px;top:841px;width:20px;height:20px;border-radius:50%;background:#90ee90"></div>
<div class="t" style="left:701px;top:839.0px;font-size:9.5px">Context:</div>
<div class="t" style="left:823px;top:839.0px;font-size:9.5px;color:#000;font-weight:bold">Person</div>
<div class="t" style="left:958px;top:839.0px;font-size:9.5px">CursorContext:</div>
<div class="a" style="left:1055px;top:838px;width:93px;height:13px;background:#fff8d0"></div>
<div class="t" style="left:1057px;top:839.0px;font-size:9.5px;color:#000;font-weight:bold">Person (Collection)</div>
<div class="t" style="left:680px;top:866.0px;font-size:11px">Syntax ok</div>
<div class="t" style="left:680px;top:890.5px;font-size:11px">Collection(Person)</div>
<div class="t" style="left:1215px;top:839.2px;font-size:11px">Returns the list of all instances of the type operated</div>
<div class="t" style="left:1215px;top:852.2px;font-size:11px">on.</div>
<div class="t" style="left:1215px;top:875.7px;font-size:11px">Wiki on</div>
<div class="t" style="left:1254px;top:875.7px;font-size:11px;color:#0066cc;text-decoration:underline">allInstances</div>
<div class="a" style="left:677px;top:990px;width:110px;height:26px;background:#e1e1e1;border:1px solid #adadad;font-size:11.5px;line-height:24px;color:#000;text-align:center;white-space:nowrap;overflow:hidden">Sub Expression</div>
<div class="a" style="left:791px;top:990px;width:110px;height:26px;background:#e1e1e1;border:1px solid #adadad;font-size:11.5px;line-height:24px;color:#000;text-align:center;white-space:nowrap;overflow:hidden">Expression Analyze</div>
<div class="a" style="left:1244px;top:996px;width:14px;height:14px;border:1px solid #333;background:#fff"></div>
<div class="t" style="left:1263px;top:995.4px;font-size:11.3px">Stay open</div>
<div class="a" style="left:1354px;top:990px;width:60px;height:26px;background:#e1e1e1;border:1px solid #adadad;font-size:11.5px;line-height:24px;color:#000;text-align:center;white-space:nowrap;overflow:hidden">Ok</div>
<div class="a" style="left:1418px;top:990px;width:60px;height:26px;background:#e1e1e1;border:1px solid #adadad;font-size:11.5px;line-height:24px;color:#000;text-align:center;white-space:nowrap;overflow:hidden">Cancel</div>
<svg class="a" style="left:0;top:0;filter:drop-shadow(2px 3px 2px rgba(0,0,0,.3))" width="1914" height="1149"><polygon points="487.5,679.5 489,679.5 510,912 516,916 505.5,939 493,915 501,912" fill="#00b0ea"/><polygon points="997,461.3 997.5,460 1146.4,363.7 1142.7,360 1171,356 1154.6,378.8 1153,374" fill="#00b0ea"/><polygon points="991.5,708 990.5,708.5 847.8,600.4 845.8,605.6 833,580 861,587 855.7,591" fill="#00b0ea"/><polygon points="1404.5,793.8 1405.5,794 1394,962.7 1400.3,961.2 1385.3,985.4 1376.3,959.4 1382.6,962.7" fill="#00b0ea"/></svg>
<div class="a" style="left:469px;top:629px;width:30px;height:30px;border-radius:50%;background:radial-gradient(circle at 50% 40%,#3ab4e4,#22a4d8);box-shadow:1px 2px 4px rgba(0,0,0,.3);color:#fff;font-size:16px;line-height:30px;text-align:center"><span style="display:inline-block;transform:scaleX(.82)">1</span></div>
<div class="a" style="left:954px;top:467.5px;width:30px;height:30px;border-radius:50%;background:radial-gradient(circle at 50% 40%,#3ab4e4,#22a4d8);box-shadow:1px 2px 4px rgba(0,0,0,.3);color:#fff;font-size:16px;line-height:30px;text-align:center"><span style="display:inline-block;transform:scaleX(.82)">2</span></div>
<div class="a" style="left:1002.5px;top:714.5px;width:30px;height:30px;border-radius:50%;background:radial-gradient(circle at 50% 40%,#3ab4e4,#22a4d8);box-shadow:1px 2px 4px rgba(0,0,0,.3);color:#fff;font-size:16px;line-height:30px;text-align:center"><span style="display:inline-block;transform:scaleX(.82)">3</span></div>
<div class="a" style="left:1403px;top:747.5px;width:30px;height:30px;border-radius:50%;background:radial-gradient(circle at 50% 40%,#3ab4e4,#22a4d8);box-shadow:1px 2px 4px rgba(0,0,0,.3);color:#fff;font-size:16px;line-height:30px;text-align:center"><span style="display:inline-block;transform:scaleX(.82)">4</span></div></body></html>
